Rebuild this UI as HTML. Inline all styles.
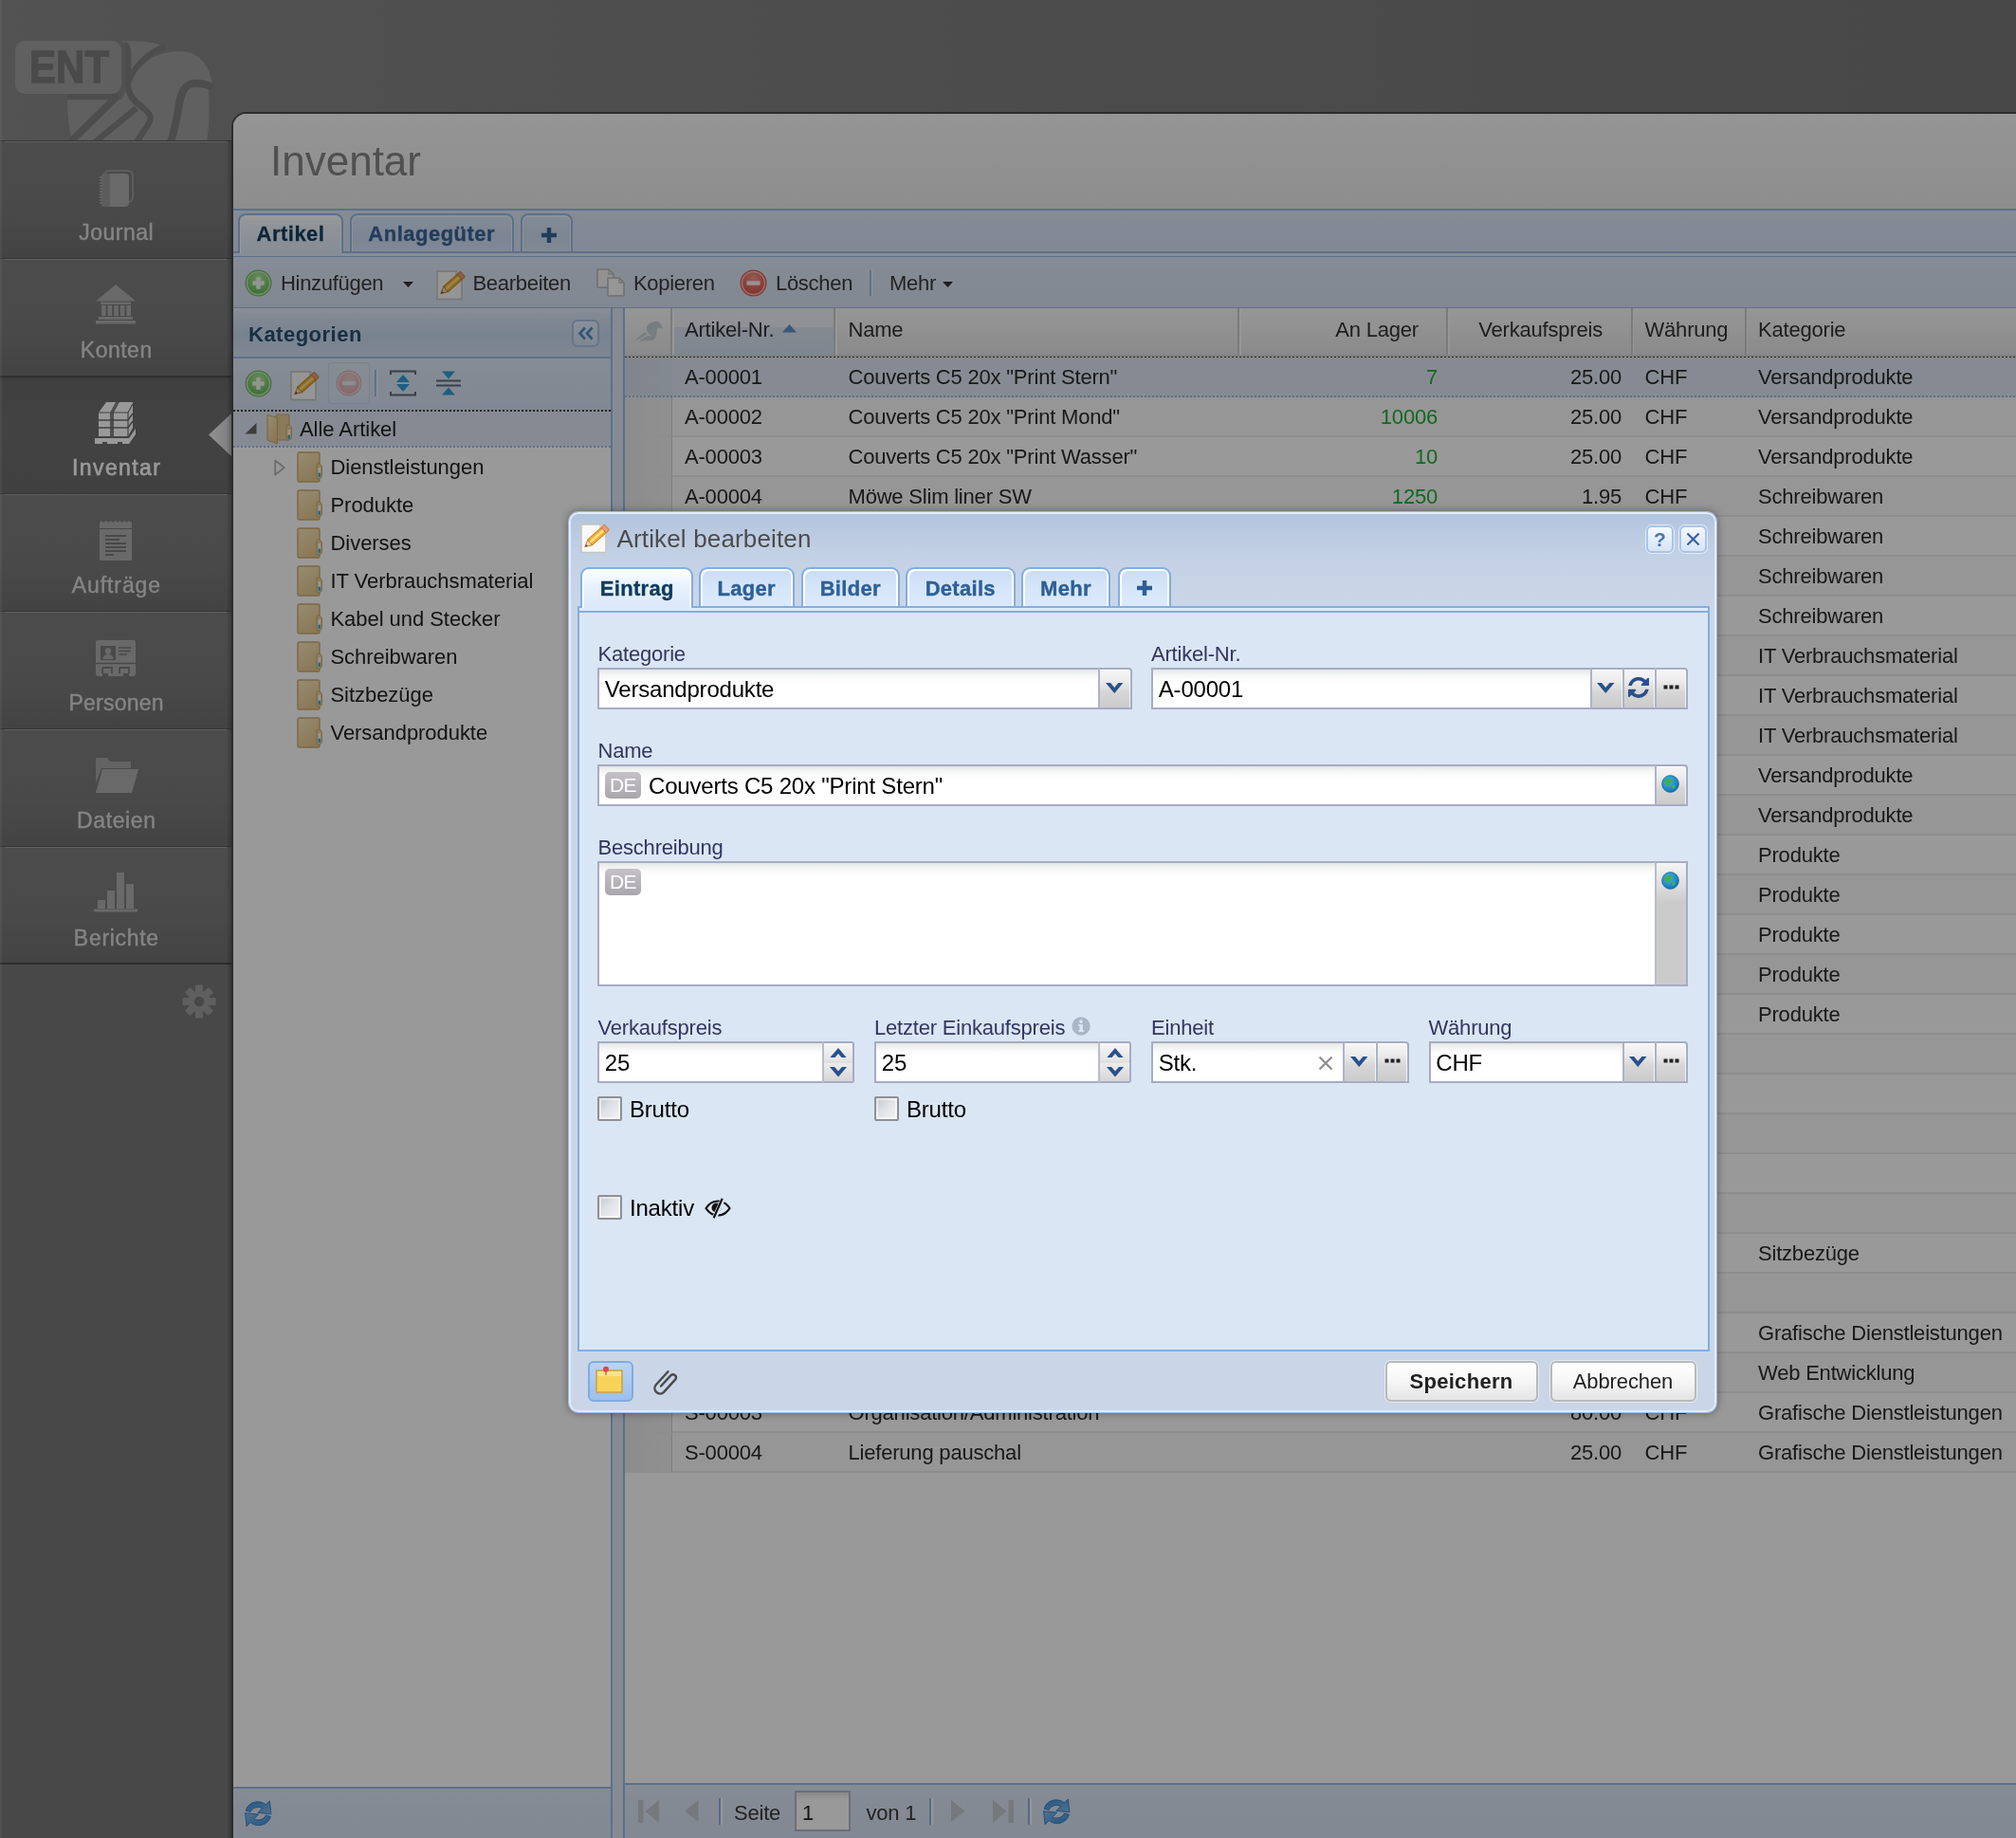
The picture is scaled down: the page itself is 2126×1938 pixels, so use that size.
<!DOCTYPE html>
<html><head><meta charset="utf-8"><title>Inventar</title>
<style>
html,body{margin:0;padding:0}
body{width:2126px;height:1938px;overflow:hidden;position:relative;background:#787878;font-family:"Liberation Sans", sans-serif;}
div{box-sizing:border-box}
svg{display:block;position:absolute}
</style></head><body>
<div id="app" style="position:absolute;left:0;top:0;width:2126px;height:1938px;overflow:hidden;will-change:transform">
<div style="position:absolute;left:0px;top:0px;width:245px;height:1938px;background:#787878;"></div>
<div style="position:absolute;left:0px;top:0px;width:2126px;height:148px;background:linear-gradient(90deg,#8a8a8a 0px,#868686 245px,#7e7e7e 1200px,#787878 2126px);"></div>
<svg style="left:0;top:0" width="245" height="148" viewBox="0 0 245 148">
<defs><clipPath id="lgc"><rect x="0" y="0" width="245" height="148"/></clipPath></defs>
<g clip-path="url(#lgc)">
<path d="M128,43 L150,43.500 C158,44 166,46 173,49 C156,56 143,68 135,84 L135,56 C135,50 133,45 128,43Z" fill="#a0a0a0"/>
<path d="M71,105 L128,105 L132,97 C135,86 146,70 160,61 C170,56 180,54 190,54 C208,54 220,66 224,88 L220,96 C221,110 221,130 218,150 L76,150 C73,136 71,120 71,105Z" fill="#a0a0a0"/>
<path d="M123,102 L74,150" fill="none" stroke="#818181" stroke-width="7.500"/>
<path d="M144,114 L100,150" fill="none" stroke="#818181" stroke-width="6.500"/>
<path d="M131,46 C134,48 135,51 135,56 L135,90 C135,98 140,106 150,113 C158,119 161,124 157,130 L144,150" fill="none" stroke="#818181" stroke-width="6.500"/>
<path d="M174,48.500 C156,56 143,68 136,85" fill="none" stroke="#818181" stroke-width="6"/>
<path d="M71,102 L125,102" fill="none" stroke="#818181" stroke-width="6.500"/>
<path d="M224,92 C215,88 206,87 200,89 C192,93 190,103 188,115 C186,130 183,140 180,150" fill="none" stroke="#818181" stroke-width="8"/>
<rect x="16" y="43" width="112" height="56" rx="10" fill="#a0a0a0"/>
</g></svg>
<div style="position:absolute;left:30.500px;top:45px;font-size:47.500px;line-height:52px;font-weight:bold;color:#7c7c7c;-webkit-text-stroke:1.300px #7c7c7c;transform:scaleX(.885);transform-origin:0 0;letter-spacing:0px;white-space:nowrap">ENT</div>
<div style="position:absolute;left:0px;top:148px;width:245px;height:124px;background:linear-gradient(180deg,#7f7f7f 0%,#7b7b7b 60%,#707070 100%);"></div>
<div style="position:absolute;left:0px;top:148px;width:245px;height:2px;background:#5a5a5a;height:1px;"></div>
<div style="position:absolute;left:5px;top:149px;width:234px;height:1px;background:#a2a2a2;"></div>
<svg style="left:104px;top:179px;" width="37" height="40" viewBox="0 0 37 40"><rect x="6" y="1" width="30" height="33" rx="5" fill="none" stroke="#b0b0b0" stroke-width="1.4" opacity=".8"/>
<rect x="3" y="4" width="29" height="35" rx="4" fill="#b0b0b0"/><rect x="3" y="4" width="9" height="35" rx="2" fill="#9c9c9c"/>
<path d="M1 8h3M1 11h3M1 14h3M1 17h3M1 20h3M1 23h3M1 26h3M1 29h3M1 32h3M1 35h3" stroke="#b0b0b0" stroke-width="1.3"/></svg>
<div style="position:absolute;left:0;top:232.0px;width:245px;text-align:center;font-size:23px;line-height:26px;color:#dcdcdc;letter-spacing:0.5px;font-weight:normal;-webkit-text-stroke:.4px #dcdcdc;padding-left:0.5px">Journal</div>
<div style="position:absolute;left:0px;top:272px;width:245px;height:124px;background:linear-gradient(180deg,#7f7f7f 0%,#7b7b7b 60%,#707070 100%);"></div>
<div style="position:absolute;left:0px;top:272px;width:245px;height:2px;background:#5a5a5a;height:1px;"></div>
<div style="position:absolute;left:5px;top:273px;width:234px;height:1px;background:#a2a2a2;"></div>
<svg style="left:101px;top:300px;" width="42" height="42" viewBox="0 0 42 42"><path d="M21 0l21 17.500H0z" fill="#b0b0b0"/><rect x="5" y="18.500" width="32" height="2.500" fill="#b0b0b0"/>
<rect x="6" y="22" width="4.600" height="11" fill="#b0b0b0"/><rect x="12.600" y="22" width="4.600" height="11" fill="#b0b0b0"/><rect x="19.200" y="22" width="4.600" height="11" fill="#b0b0b0"/><rect x="25.800" y="22" width="4.600" height="11" fill="#b0b0b0"/><rect x="32.400" y="22" width="4.600" height="11" fill="#b0b0b0"/>
<rect x="3" y="34" width="36" height="3" fill="#b0b0b0"/><rect x="0" y="38" width="42" height="3.500" fill="#b0b0b0"/></svg>
<div style="position:absolute;left:0;top:356.0px;width:245px;text-align:center;font-size:23px;line-height:26px;color:#dcdcdc;letter-spacing:0.5px;font-weight:normal;-webkit-text-stroke:.4px #dcdcdc;padding-left:0.5px">Konten</div>
<div style="position:absolute;left:0px;top:396px;width:245px;height:124px;background:linear-gradient(180deg,#5c5c5c 0px,#6a6a6a 5px,#6f6f6f 40%,#6c6c6c 100%);"></div>
<div style="position:absolute;left:0px;top:396px;width:245px;height:2px;background:#505050;"></div>
<svg style="left:100px;top:423px;" width="44" height="46" viewBox="0 0 44 46"><path d="M4 12l8-11h28v27l-5 9H4z" fill="#ffffff"/>
<path d="M4 12h31l5-9M35 12v25" stroke="#6e6e6e" stroke-width="1.200" fill="none"/>
<path d="M4 20h31l5-7M4 28h31l5-7" stroke="#6e6e6e" stroke-width="1.600" fill="none"/>
<path d="M16 12l6-11h4l-6 11v25h-4z" fill="#6e6e6e" opacity=".85"/>
<path d="M0 39h36l7-10v6l-7 10H0z" fill="#ffffff"/><rect x="8" y="43" width="5" height="3" fill="#6e6e6e"/><rect x="24" y="43" width="5" height="3" fill="#6e6e6e"/></svg>
<div style="position:absolute;left:0;top:480.0px;width:245px;text-align:center;font-size:23px;line-height:26px;color:#ffffff;letter-spacing:1.4px;font-weight:normal;-webkit-text-stroke:.6px #ffffff;padding-left:1.4px">Inventar</div>
<div style="position:absolute;left:0px;top:520px;width:245px;height:124px;background:linear-gradient(180deg,#7f7f7f 0%,#7b7b7b 60%,#707070 100%);"></div>
<div style="position:absolute;left:0px;top:520px;width:245px;height:2px;background:#5a5a5a;height:1px;"></div>
<div style="position:absolute;left:5px;top:521px;width:234px;height:1px;background:#a2a2a2;"></div>
<svg style="left:105px;top:549px;" width="34" height="42" viewBox="0 0 34 42"><path d="M0 2l2-2 2.400 2 2.400-2 2.400 2 2.400-2 2.400 2 2.400-2 2.400 2 2.400-2 2.400 2 2.400-2 2.400 2 2.400-2L34 2v40H0z" fill="#b0b0b0"/>
<path d="M0 8.500h34" stroke="#7a7a7a" stroke-width="1.200"/>
<path d="M6 16h22M6 20h15M6 24h22M6 28h22M6 32h22M6 36h9" stroke="#7a7a7a" stroke-width="1.800"/></svg>
<div style="position:absolute;left:0;top:604.0px;width:245px;text-align:center;font-size:23px;line-height:26px;color:#dcdcdc;letter-spacing:0.9px;font-weight:normal;-webkit-text-stroke:.4px #dcdcdc;padding-left:0.9px">Aufträge</div>
<div style="position:absolute;left:0px;top:644px;width:245px;height:124px;background:linear-gradient(180deg,#7f7f7f 0%,#7b7b7b 60%,#707070 100%);"></div>
<div style="position:absolute;left:0px;top:644px;width:245px;height:2px;background:#5a5a5a;height:1px;"></div>
<div style="position:absolute;left:5px;top:645px;width:234px;height:1px;background:#a2a2a2;"></div>
<svg style="left:101px;top:675px;" width="42" height="38" viewBox="0 0 42 38"><path d="M3 0h36a3 3 0 0 1 3 3v32a3 3 0 0 1-3 3h-4v-3h-6v3H13v-3H7v3H3a3 3 0 0 1-3-3V3a3 3 0 0 1 3-3z" fill="#b0b0b0"/>
<rect x="5" y="6" width="16" height="15" fill="#7a7a7a"/><circle cx="13" cy="11.500" r="3.200" fill="#b0b0b0"/><path d="M7.500 20c0-3.500 2.500-5 5.500-5s5.500 1.500 5.500 5z" fill="#b0b0b0"/>
<path d="M24 8h13M24 11.500h13M24 15h9" stroke="#7a7a7a" stroke-width="1.600"/><path d="M0 24.500h42" stroke="#7a7a7a" stroke-width="1.600"/>
<path d="M7 29h10v6M25 29h10v6" stroke="#7a7a7a" stroke-width="1.800" fill="none"/><path d="M7 29v6M25 29v6" stroke="#7a7a7a" stroke-width="1.800"/></svg>
<div style="position:absolute;left:0;top:728.0px;width:245px;text-align:center;font-size:23px;line-height:26px;color:#dcdcdc;letter-spacing:0.2px;font-weight:normal;-webkit-text-stroke:.4px #dcdcdc;padding-left:0.2px">Personen</div>
<div style="position:absolute;left:0px;top:768px;width:245px;height:124px;background:linear-gradient(180deg,#7f7f7f 0%,#7b7b7b 60%,#707070 100%);"></div>
<div style="position:absolute;left:0px;top:768px;width:245px;height:2px;background:#5a5a5a;height:1px;"></div>
<div style="position:absolute;left:5px;top:769px;width:234px;height:1px;background:#a2a2a2;"></div>
<svg style="left:100px;top:799px;" width="46" height="38" viewBox="0 0 46 38"><path d="M1 0h12l3 4h22v7H7L1 26z" fill="#b0b0b0" opacity=".8"/><path d="M8 12h38l-7 25H1z" fill="#b0b0b0"/></svg>
<div style="position:absolute;left:0;top:852.0px;width:245px;text-align:center;font-size:23px;line-height:26px;color:#dcdcdc;letter-spacing:0.6px;font-weight:normal;-webkit-text-stroke:.4px #dcdcdc;padding-left:0.6px">Dateien</div>
<div style="position:absolute;left:0px;top:892px;width:245px;height:124px;background:linear-gradient(180deg,#7f7f7f 0%,#7b7b7b 60%,#707070 100%);"></div>
<div style="position:absolute;left:0px;top:892px;width:245px;height:2px;background:#5a5a5a;height:1px;"></div>
<div style="position:absolute;left:5px;top:893px;width:234px;height:1px;background:#a2a2a2;"></div>
<svg style="left:99px;top:920px;" width="46" height="42" viewBox="0 0 46 42"><rect x="4" y="29" width="8" height="9" fill="#b0b0b0"/><rect x="14" y="19" width="8" height="19" fill="#b0b0b0"/><rect x="24" y="0" width="8" height="38" fill="#b0b0b0"/><rect x="34" y="12" width="8" height="26" fill="#b0b0b0"/><rect x="0" y="38.500" width="46" height="3" fill="#b0b0b0"/></svg>
<div style="position:absolute;left:0;top:976.0px;width:245px;text-align:center;font-size:23px;line-height:26px;color:#dcdcdc;letter-spacing:0.7px;font-weight:normal;-webkit-text-stroke:.4px #dcdcdc;padding-left:0.7px">Berichte</div>
<div style="position:absolute;left:0px;top:1015px;width:245px;height:2px;background:#4c4c4c;"></div>
<svg style="left:220px;top:435px" width="25" height="47" viewBox="0 0 25 47"><defs><linearGradient id="arw" x1="0" x2="1" y1="0" y2="0"><stop offset="0" stop-color="#f2f2f2"/><stop offset="1" stop-color="#d2d2d2"/></linearGradient></defs><path d="M25 0v47L0 23.500z" fill="url(#arw)"/></svg>
<svg style="left:192px;top:1038px" width="36" height="36" viewBox="0 0 36 36"><g fill="#9e9e9e"><circle cx="18" cy="18" r="11.500"/><rect x="14" y="0.500" width="8" height="9" rx="1.200" transform="rotate(0 18 18)"/><rect x="14" y="0.500" width="8" height="9" rx="1.200" transform="rotate(45 18 18)"/><rect x="14" y="0.500" width="8" height="9" rx="1.200" transform="rotate(90 18 18)"/><rect x="14" y="0.500" width="8" height="9" rx="1.200" transform="rotate(135 18 18)"/><rect x="14" y="0.500" width="8" height="9" rx="1.200" transform="rotate(180 18 18)"/><rect x="14" y="0.500" width="8" height="9" rx="1.200" transform="rotate(225 18 18)"/><rect x="14" y="0.500" width="8" height="9" rx="1.200" transform="rotate(270 18 18)"/><rect x="14" y="0.500" width="8" height="9" rx="1.200" transform="rotate(315 18 18)"/></g><circle cx="18" cy="18" r="5.200" fill="#787878"/></svg>
<div style="position:absolute;left:239px;top:148px;width:6px;height:1790px;background:linear-gradient(90deg,rgba(0,0,0,0),rgba(0,0,0,.28));"></div>
<div style="position:absolute;left:0px;top:0px;width:2px;height:1938px;background:rgba(255,255,255,.12);"></div>
<div style="position:absolute;left:244px;top:118px;width:1900px;height:1840px;background:#4a4a4a;border-top-left-radius:16px;"></div>
<div style="position:absolute;left:246px;top:120px;width:1900px;height:1840px;background:#fff;border-top-left-radius:14px;overflow:hidden">
<div style="position:absolute;left:0px;top:0px;width:1900px;height:100px;background:linear-gradient(180deg,#f8f8f8,#ececec);"></div>
<div style="position:absolute;left:39px;top:20.75px;font-size:44px;line-height:57px;color:#858585;font-weight:normal;letter-spacing:0px;white-space:nowrap;">Inventar</div>
<div style="position:absolute;left:0px;top:99.5px;width:1900px;height:51.5px;background:linear-gradient(180deg,#dfe9f9,#d6e3f6);border-top:2px solid #99bbe8;"></div>
<div style="position:absolute;left:0px;top:144.5px;width:1900px;height:7px;background:#e1ebfa;border-top:2px solid #99bbe8;border-bottom:2px solid #99bbe8;"></div>
<div style="position:absolute;left:5px;top:104.5px;width:111px;height:42.0px;background:linear-gradient(180deg,#ffffff 0%,#eef5fd 35%,#e1ebfa 100%);border:2px solid #99bbe8;border-bottom:none;border-radius:8px 8px 0 0;box-shadow:inset 0 1px 0 1px #fff;"><div style="position:absolute;left:0;right:0;top:6.400px;text-align:center;font-size:22px;line-height:28px;font-weight:bold;color:#163f5f;letter-spacing:0.5px;-webkit-text-stroke:.3px #163f5f">Artikel</div></div>
<div style="position:absolute;left:122.5px;top:104.5px;width:173.5px;height:40.0px;background:linear-gradient(180deg,#dbe8f9 0%,#cfdff4 60%,#d6e4f7 100%);border:2px solid #99bbe8;border-bottom:none;border-radius:8px 8px 0 0;box-shadow:inset 0 1px 0 1px #eef4fc;"><div style="position:absolute;left:0;right:0;top:6.400px;text-align:center;font-size:22px;line-height:28px;font-weight:bold;color:#39659c;letter-spacing:0.5px;-webkit-text-stroke:.3px #39659c">Anlagegüter</div></div>
<div style="position:absolute;left:303px;top:104.5px;width:55px;height:40.0px;background:linear-gradient(180deg,#dbe8f9 0%,#cfdff4 60%,#d6e4f7 100%);border:2px solid #99bbe8;border-bottom:none;border-radius:8px 8px 0 0;box-shadow:inset 0 1px 0 1px #eef4fc;"><svg style="left:18.5px;top:12.0px" width="18" height="18" viewBox="0 0 18 18"><path d="M9 1v16M1 9h16" stroke="#39659c" stroke-width="4.400"/></svg></div>
<div style="position:absolute;left:0px;top:151px;width:1900px;height:54.5px;background:linear-gradient(180deg,#e0e9f8,#d7e3f5);border-bottom:2px solid #99bbe8;"></div>
<div style="position:absolute;left:-246px;top:-120px;width:0;height:0"><svg style="left:257.5px;top:283.5px;opacity:1" width="29" height="29" viewBox="0 0 29 29"><defs><radialGradient id="g1" cx="50%" cy="30%" r="75%"><stop offset="0" stop-color="#b4e8a0"/><stop offset="1" stop-color="#5db552"/></radialGradient></defs>
<circle cx="14.500" cy="14.500" r="14" fill="#72bd66"/><circle cx="14.500" cy="14.500" r="12" fill="url(#g1)" stroke="#c4ecb8" stroke-width="1.400"/>
<path d="M14.500 8.300v12.400M8.300 14.500h12.400" stroke="#f4fbf1" stroke-width="4.400"/></svg></div>
<div style="position:absolute;left:50px;top:163.88px;font-size:22px;line-height:29px;color:#3a3a3a;font-weight:normal;letter-spacing:-0.3px;white-space:nowrap;">Hinzufügen</div>
<div style="position:absolute;left:-246px;top:-120px;width:0;height:0"><svg style="left:425px;top:297px;" width="11" height="6" viewBox="0 0 11 6"><path d="M0 0h11l-5.5 6z" fill="#333"/></svg></div>
<div style="position:absolute;left:-246px;top:-120px;width:0;height:0"><svg style="left:459.5px;top:285px;" width="32" height="32" viewBox="0 0 32 32"><path d="M1 1h20l6 6v23.500h-26z" fill="#f8f8f8" stroke="#c4c4c4" stroke-width="1.500" stroke-linejoin="round"/><path d="M21 1v6h6" fill="#e9e9e9" stroke="#c4c4c4" stroke-width="1.200" stroke-linejoin="round"/>
<g transform="translate(5,24.5) rotate(-41.71)">
<path d="M0 0L7 -3.7V3.7Z" fill="#f4dcae" stroke="#c58a3a" stroke-width="1"/><path d="M0 0L2.600 -1.400V1.400Z" fill="#6b5030"/>
<rect x="7" y="-3.7" width="19.31" height="7.4" fill="#f2ae34" stroke="#c9842a" stroke-width="1"/>
<rect x="7" y="-1.300" width="19.31" height="2.600" fill="#fbe27e"/>
<rect x="26.31" y="-3.7" width="4.500" height="7.4" rx="1" fill="#ee9a86" stroke="#c9842a" stroke-width="1"/>
</g></svg></div>
<div style="position:absolute;left:252.5px;top:163.88px;font-size:22px;line-height:29px;color:#3a3a3a;font-weight:normal;letter-spacing:-0.3px;white-space:nowrap;">Bearbeiten</div>
<div style="position:absolute;left:-246px;top:-120px;width:0;height:0"><svg style="left:628px;top:282px;" width="32" height="32" viewBox="0 0 32 32"><path d="M2 2h12l5 5v14H2z" fill="#f4f4f4" stroke="#b9b9b9" stroke-width="1.5" stroke-linejoin="round"/><path d="M14 2v5h5" fill="none" stroke="#c0c0c0" stroke-width="1.3"/>
<path d="M13 11h12l5 5v14H13z" fill="#fafafa" stroke="#b9b9b9" stroke-width="1.5" stroke-linejoin="round"/><path d="M25 11v5h5" fill="none" stroke="#c0c0c0" stroke-width="1.3"/></svg></div>
<div style="position:absolute;left:422px;top:163.88px;font-size:22px;line-height:29px;color:#3a3a3a;font-weight:normal;letter-spacing:-0.3px;white-space:nowrap;">Kopieren</div>
<div style="position:absolute;left:-246px;top:-120px;width:0;height:0"><svg style="left:779.5px;top:283.5px;opacity:1" width="29" height="29" viewBox="0 0 29 29"><defs><radialGradient id="g2" cx="50%" cy="30%" r="75%"><stop offset="0" stop-color="#f79a90"/><stop offset="1" stop-color="#dc4a40"/></radialGradient></defs>
<circle cx="14.500" cy="14.500" r="14" fill="#dd5d53"/><circle cx="14.500" cy="14.500" r="12" fill="url(#g2)" stroke="#f8c2bc" stroke-width="1.400"/>
<path d="M7.500 14.500h14" stroke="#fdf3f2" stroke-width="4.400"/></svg></div>
<div style="position:absolute;left:572px;top:163.88px;font-size:22px;line-height:29px;color:#3a3a3a;font-weight:normal;letter-spacing:-0.3px;white-space:nowrap;">Löschen</div>
<div style="position:absolute;left:671px;top:165px;width:2px;height:27px;background:#9dbbe0;"></div>
<div style="position:absolute;left:673px;top:165px;width:1px;height:27px;background:#fff;opacity:.7"></div>
<div style="position:absolute;left:692px;top:163.88px;font-size:22px;line-height:29px;color:#3a3a3a;font-weight:normal;letter-spacing:-0.3px;white-space:nowrap;">Mehr</div>
<div style="position:absolute;left:-246px;top:-120px;width:0;height:0"><svg style="left:994px;top:297px;" width="11" height="6" viewBox="0 0 11 6"><path d="M0 0h11l-5.5 6z" fill="#333"/></svg></div>
<div style="position:absolute;left:0px;top:205px;width:400px;height:1620px;background:#fff;border-right:2px solid #99bbe8;"></div>
<div style="position:absolute;left:0px;top:205px;width:398px;height:52.5px;background:linear-gradient(180deg,#eaf1fb 0%,#d9e5f5 12%,#c9daf0 55%,#d3e1f3 100%);border-bottom:2px solid #99bbe8;"></div>
<div style="position:absolute;left:16px;top:217.88px;font-size:22px;line-height:29px;color:#27516f;font-weight:bold;letter-spacing:0.5px;white-space:nowrap;">Kategorien</div>
<div style="position:absolute;left:357px;top:217px;width:29px;height:29px;border:2px solid #a8c2e4;border-radius:6px;background:linear-gradient(180deg,#e8f0fb,#d3e1f4);"></div>
<div style="position:absolute;left:-246px;top:-120px;width:0;height:0"><svg style="left:609px;top:344px;" width="18" height="15" viewBox="0 0 18 15"><path d="M8 1.500L2.500 7.500 8 13.500M15.500 1.500L10 7.500l5.500 6" fill="none" stroke="#4f8fc8" stroke-width="2.600"/></svg></div>
<div style="position:absolute;left:0px;top:257.5px;width:398px;height:54.5px;background:linear-gradient(180deg,#e0e9f8,#d7e3f5);"></div>
<div style="position:absolute;left:-246px;top:-120px;width:0;height:0"><svg style="left:257.5px;top:389.5px;opacity:1" width="29" height="29" viewBox="0 0 29 29"><defs><radialGradient id="g3" cx="50%" cy="30%" r="75%"><stop offset="0" stop-color="#b4e8a0"/><stop offset="1" stop-color="#5db552"/></radialGradient></defs>
<circle cx="14.500" cy="14.500" r="14" fill="#72bd66"/><circle cx="14.500" cy="14.500" r="12" fill="url(#g3)" stroke="#c4ecb8" stroke-width="1.400"/>
<path d="M14.500 8.300v12.400M8.300 14.500h12.400" stroke="#f4fbf1" stroke-width="4.400"/></svg></div>
<div style="position:absolute;left:-246px;top:-120px;width:0;height:0"><svg style="left:305.5px;top:391px;" width="32" height="32" viewBox="0 0 32 32"><path d="M1 1h20l6 6v23.500h-26z" fill="#f8f8f8" stroke="#c4c4c4" stroke-width="1.500" stroke-linejoin="round"/><path d="M21 1v6h6" fill="#e9e9e9" stroke="#c4c4c4" stroke-width="1.200" stroke-linejoin="round"/>
<g transform="translate(5,24.5) rotate(-41.71)">
<path d="M0 0L7 -3.7V3.7Z" fill="#f4dcae" stroke="#c58a3a" stroke-width="1"/><path d="M0 0L2.600 -1.400V1.400Z" fill="#6b5030"/>
<rect x="7" y="-3.7" width="19.31" height="7.4" fill="#f2ae34" stroke="#c9842a" stroke-width="1"/>
<rect x="7" y="-1.300" width="19.31" height="2.600" fill="#fbe27e"/>
<rect x="26.31" y="-3.7" width="4.500" height="7.4" rx="1" fill="#ee9a86" stroke="#c9842a" stroke-width="1"/>
</g></svg></div>
<div style="position:absolute;left:100px;top:262px;width:44px;height:44px;border:1px solid rgba(190,205,225,.6);border-radius:4px;background:rgba(225,233,246,.5)"></div>
<div style="position:absolute;left:-246px;top:-120px;width:0;height:0"><svg style="left:353.5px;top:389.5px;opacity:0.38" width="28" height="28" viewBox="0 0 29 29"><defs><radialGradient id="g4" cx="50%" cy="30%" r="75%"><stop offset="0" stop-color="#f79a90"/><stop offset="1" stop-color="#dc4a40"/></radialGradient></defs>
<circle cx="14.500" cy="14.500" r="14" fill="#dd5d53"/><circle cx="14.500" cy="14.500" r="12" fill="url(#g4)" stroke="#f8c2bc" stroke-width="1.400"/>
<path d="M7.500 14.500h14" stroke="#fdf3f2" stroke-width="4.400"/></svg></div>
<div style="position:absolute;left:149px;top:270px;width:2px;height:28px;background:#9dbbe0;"></div>
<div style="position:absolute;left:151px;top:270px;width:1px;height:28px;background:#fff;opacity:.7"></div>
<div style="position:absolute;left:-246px;top:-120px;width:0;height:0"><svg style="left:411px;top:390px;" width="28" height="28" viewBox="0 0 28 28"><path d="M1 5V1.5h26V5M1 23v3.5h26V23" fill="none" stroke="#5f6b7a" stroke-width="2"/>
<path d="M14 5l7 8H7zM14 23l7-8H7z" fill="#2f9fd8"/></svg></div>
<div style="position:absolute;left:-246px;top:-120px;width:0;height:0"><svg style="left:459px;top:390px;" width="28" height="28" viewBox="0 0 28 28"><path d="M1 11.5h26M1 16.5h26" fill="none" stroke="#5f6b7a" stroke-width="2"/>
<path d="M14 9.5l7-8H7zM14 18.5l7 8H7z" fill="#2f9fd8"/></svg></div>
<div style="position:absolute;left:0px;top:312px;width:398px;height:2px;background:repeating-linear-gradient(90deg,#3c3c3c 0 2px,#dcdcdc 2px 4px);"></div>
<div style="position:absolute;left:0px;top:314px;width:398px;height:37px;background:#dfe8f6;"></div>
<div style="position:absolute;left:0px;top:350px;width:398px;height:2px;background:repeating-linear-gradient(90deg,#9fb9e6 0 2px,transparent 2px 4px);"></div>
<div style="position:absolute;left:-246px;top:-120px;width:0;height:0"><svg style="left:258px;top:446px;" width="13" height="12" viewBox="0 0 13 12"><path d="M12.500 0v11.500H.5z" fill="#666"/></svg></div>
<div style="position:absolute;left:-246px;top:-120px;width:0;height:0"><svg style="left:281px;top:435.5px;" width="28" height="34" viewBox="0 0 28 34"><defs><linearGradient id="g5" x1="0" y1="0" x2=".6" y2="1"><stop offset="0" stop-color="#fbeac0"/><stop offset="1" stop-color="#e6c88f"/></linearGradient></defs><rect x="10" y="1" width="14" height="27" rx="1.500" fill="#e6cb94" stroke="#cfac70" stroke-width="1.200"/><path d="M21 12.500c3-1.500 5.500.5 5.500 3.500v8.500c0 2-1.500 3.500-3.500 3.500H21z" fill="#e9d09a" stroke="#cfac70" stroke-width="1"/><rect x="22.600" y="17" width="2.400" height="6" fill="#fdfdfd"/><rect x="22.600" y="22.500" width="2.400" height="4.500" rx="1" fill="#38b0dc"/><path d="M1 1.500l10.500 3v27.500L1 28z" fill="url(#g5)" stroke="#cfac70" stroke-width="1.200" stroke-linejoin="round"/></svg></div>
<div style="position:absolute;left:70px;top:317.88px;font-size:22px;line-height:29px;color:#222;font-weight:normal;letter-spacing:-0.05px;white-space:nowrap;">Alle Artikel</div>
<div style="position:absolute;left:-246px;top:-120px;width:0;height:0"><svg style="left:289px;top:484px;" width="12" height="18" viewBox="0 0 12 18"><path d="M1.200 1.500v15l9.600-7.500z" fill="none" stroke="#b4b4b4" stroke-width="1.800" stroke-linejoin="round"/></svg></div>
<div style="position:absolute;left:-246px;top:-120px;width:0;height:0"><svg style="left:313px;top:475.5px;" width="28" height="34" viewBox="0 0 28 34"><defs><linearGradient id="g6" x1="0" y1="0" x2=".6" y2="1"><stop offset="0" stop-color="#fbeac0"/><stop offset="1" stop-color="#e6c88f"/></linearGradient></defs><rect x="1" y="1" width="23" height="31" rx="1.500" fill="url(#g6)" stroke="#cfac70" stroke-width="1.400"/><path d="M21 13.500c3-1.500 5.500.5 5.500 3.500v8.500c0 2-1.500 3.500-3.500 3.500H21z" fill="#e9d09a" stroke="#cfac70" stroke-width="1"/><rect x="22.600" y="17" width="2.400" height="6" fill="#fdfdfd"/><rect x="22.600" y="22.500" width="2.400" height="4.500" rx="1" fill="#38b0dc"/></svg></div>
<div style="position:absolute;left:102.5px;top:357.88px;font-size:22px;line-height:29px;color:#222;font-weight:normal;letter-spacing:-0.05px;white-space:nowrap;">Dienstleistungen</div>
<div style="position:absolute;left:-246px;top:-120px;width:0;height:0"><svg style="left:313px;top:515.5px;" width="28" height="34" viewBox="0 0 28 34"><defs><linearGradient id="g7" x1="0" y1="0" x2=".6" y2="1"><stop offset="0" stop-color="#fbeac0"/><stop offset="1" stop-color="#e6c88f"/></linearGradient></defs><rect x="1" y="1" width="23" height="31" rx="1.500" fill="url(#g7)" stroke="#cfac70" stroke-width="1.400"/><path d="M21 13.500c3-1.500 5.500.5 5.500 3.500v8.500c0 2-1.500 3.500-3.500 3.500H21z" fill="#e9d09a" stroke="#cfac70" stroke-width="1"/><rect x="22.600" y="17" width="2.400" height="6" fill="#fdfdfd"/><rect x="22.600" y="22.500" width="2.400" height="4.500" rx="1" fill="#38b0dc"/></svg></div>
<div style="position:absolute;left:102.5px;top:397.88px;font-size:22px;line-height:29px;color:#222;font-weight:normal;letter-spacing:-0.05px;white-space:nowrap;">Produkte</div>
<div style="position:absolute;left:-246px;top:-120px;width:0;height:0"><svg style="left:313px;top:555.5px;" width="28" height="34" viewBox="0 0 28 34"><defs><linearGradient id="g8" x1="0" y1="0" x2=".6" y2="1"><stop offset="0" stop-color="#fbeac0"/><stop offset="1" stop-color="#e6c88f"/></linearGradient></defs><rect x="1" y="1" width="23" height="31" rx="1.500" fill="url(#g8)" stroke="#cfac70" stroke-width="1.400"/><path d="M21 13.500c3-1.500 5.500.5 5.500 3.500v8.500c0 2-1.500 3.500-3.500 3.500H21z" fill="#e9d09a" stroke="#cfac70" stroke-width="1"/><rect x="22.600" y="17" width="2.400" height="6" fill="#fdfdfd"/><rect x="22.600" y="22.500" width="2.400" height="4.500" rx="1" fill="#38b0dc"/></svg></div>
<div style="position:absolute;left:102.5px;top:437.88px;font-size:22px;line-height:29px;color:#222;font-weight:normal;letter-spacing:-0.05px;white-space:nowrap;">Diverses</div>
<div style="position:absolute;left:-246px;top:-120px;width:0;height:0"><svg style="left:313px;top:595.5px;" width="28" height="34" viewBox="0 0 28 34"><defs><linearGradient id="g9" x1="0" y1="0" x2=".6" y2="1"><stop offset="0" stop-color="#fbeac0"/><stop offset="1" stop-color="#e6c88f"/></linearGradient></defs><rect x="1" y="1" width="23" height="31" rx="1.500" fill="url(#g9)" stroke="#cfac70" stroke-width="1.400"/><path d="M21 13.500c3-1.500 5.500.5 5.500 3.500v8.500c0 2-1.500 3.500-3.500 3.500H21z" fill="#e9d09a" stroke="#cfac70" stroke-width="1"/><rect x="22.600" y="17" width="2.400" height="6" fill="#fdfdfd"/><rect x="22.600" y="22.500" width="2.400" height="4.500" rx="1" fill="#38b0dc"/></svg></div>
<div style="position:absolute;left:102.5px;top:477.88px;font-size:22px;line-height:29px;color:#222;font-weight:normal;letter-spacing:-0.05px;white-space:nowrap;">IT Verbrauchsmaterial</div>
<div style="position:absolute;left:-246px;top:-120px;width:0;height:0"><svg style="left:313px;top:635.5px;" width="28" height="34" viewBox="0 0 28 34"><defs><linearGradient id="g10" x1="0" y1="0" x2=".6" y2="1"><stop offset="0" stop-color="#fbeac0"/><stop offset="1" stop-color="#e6c88f"/></linearGradient></defs><rect x="1" y="1" width="23" height="31" rx="1.500" fill="url(#g10)" stroke="#cfac70" stroke-width="1.400"/><path d="M21 13.500c3-1.500 5.500.5 5.500 3.500v8.500c0 2-1.500 3.500-3.500 3.500H21z" fill="#e9d09a" stroke="#cfac70" stroke-width="1"/><rect x="22.600" y="17" width="2.400" height="6" fill="#fdfdfd"/><rect x="22.600" y="22.500" width="2.400" height="4.500" rx="1" fill="#38b0dc"/></svg></div>
<div style="position:absolute;left:102.5px;top:517.88px;font-size:22px;line-height:29px;color:#222;font-weight:normal;letter-spacing:-0.05px;white-space:nowrap;">Kabel und Stecker</div>
<div style="position:absolute;left:-246px;top:-120px;width:0;height:0"><svg style="left:313px;top:675.5px;" width="28" height="34" viewBox="0 0 28 34"><defs><linearGradient id="g11" x1="0" y1="0" x2=".6" y2="1"><stop offset="0" stop-color="#fbeac0"/><stop offset="1" stop-color="#e6c88f"/></linearGradient></defs><rect x="1" y="1" width="23" height="31" rx="1.500" fill="url(#g11)" stroke="#cfac70" stroke-width="1.400"/><path d="M21 13.500c3-1.500 5.500.5 5.500 3.500v8.500c0 2-1.500 3.500-3.500 3.500H21z" fill="#e9d09a" stroke="#cfac70" stroke-width="1"/><rect x="22.600" y="17" width="2.400" height="6" fill="#fdfdfd"/><rect x="22.600" y="22.500" width="2.400" height="4.500" rx="1" fill="#38b0dc"/></svg></div>
<div style="position:absolute;left:102.5px;top:557.88px;font-size:22px;line-height:29px;color:#222;font-weight:normal;letter-spacing:-0.05px;white-space:nowrap;">Schreibwaren</div>
<div style="position:absolute;left:-246px;top:-120px;width:0;height:0"><svg style="left:313px;top:715.5px;" width="28" height="34" viewBox="0 0 28 34"><defs><linearGradient id="g12" x1="0" y1="0" x2=".6" y2="1"><stop offset="0" stop-color="#fbeac0"/><stop offset="1" stop-color="#e6c88f"/></linearGradient></defs><rect x="1" y="1" width="23" height="31" rx="1.500" fill="url(#g12)" stroke="#cfac70" stroke-width="1.400"/><path d="M21 13.500c3-1.500 5.500.5 5.500 3.500v8.500c0 2-1.500 3.500-3.500 3.500H21z" fill="#e9d09a" stroke="#cfac70" stroke-width="1"/><rect x="22.600" y="17" width="2.400" height="6" fill="#fdfdfd"/><rect x="22.600" y="22.500" width="2.400" height="4.500" rx="1" fill="#38b0dc"/></svg></div>
<div style="position:absolute;left:102.5px;top:597.88px;font-size:22px;line-height:29px;color:#222;font-weight:normal;letter-spacing:-0.05px;white-space:nowrap;">Sitzbezüge</div>
<div style="position:absolute;left:-246px;top:-120px;width:0;height:0"><svg style="left:313px;top:755.5px;" width="28" height="34" viewBox="0 0 28 34"><defs><linearGradient id="g13" x1="0" y1="0" x2=".6" y2="1"><stop offset="0" stop-color="#fbeac0"/><stop offset="1" stop-color="#e6c88f"/></linearGradient></defs><rect x="1" y="1" width="23" height="31" rx="1.500" fill="url(#g13)" stroke="#cfac70" stroke-width="1.400"/><path d="M21 13.500c3-1.500 5.500.5 5.500 3.500v8.500c0 2-1.500 3.500-3.500 3.500H21z" fill="#e9d09a" stroke="#cfac70" stroke-width="1"/><rect x="22.600" y="17" width="2.400" height="6" fill="#fdfdfd"/><rect x="22.600" y="22.500" width="2.400" height="4.500" rx="1" fill="#38b0dc"/></svg></div>
<div style="position:absolute;left:102.5px;top:637.88px;font-size:22px;line-height:29px;color:#222;font-weight:normal;letter-spacing:-0.05px;white-space:nowrap;">Versandprodukte</div>
<div style="position:absolute;left:0px;top:1764px;width:398px;height:60px;background:linear-gradient(180deg,#e0e9f8,#d7e3f5);border-top:2px solid #99bbe8;"></div>
<div style="position:absolute;left:-246px;top:-120px;width:0;height:0"><svg style="left:258px;top:1898px;" width="28.5" height="28.5" viewBox="0 0 28 28"><defs><linearGradient id="g14" x1="0" y1="0" x2="1" y2="1"><stop offset="0" stop-color="#3b8fdc"/><stop offset="1" stop-color="#86bdec"/></linearGradient></defs>
<g transform="translate(14 14) scale(1.220) translate(-14 -14)"><path d="M3.500 11.500C5 4.500 14.500 1.500 20.500 6.500L23.800 3.200L25 14.500L13.700 13.300L17.500 9.500C14.500 7.600 9.200 8.500 7.500 12.500Z" fill="url(#g14)" stroke="#3279c4" stroke-width=".700" stroke-linejoin="round"/>
<path d="M3.500 11.500C5 4.500 14.500 1.500 20.500 6.500L23.800 3.200L25 14.500L13.700 13.300L17.500 9.500C14.500 7.600 9.200 8.500 7.500 12.500Z" fill="url(#g14)" stroke="#3279c4" stroke-width=".700" stroke-linejoin="round" transform="rotate(180 14 14)"/></g></svg></div>
<div style="position:absolute;left:400px;top:205px;width:12px;height:1620px;background:#dfe8f6;"></div>
<div style="position:absolute;left:411px;top:205px;width:1500px;height:1620px;background:#fff;border-left:2px solid #99bbe8;"></div>
<div style="position:absolute;left:413px;top:205px;width:1500px;height:51px;background:linear-gradient(180deg,#fafafa 0%,#f3f3f3 40%,#e6e6e6 100%);border-bottom:2px solid #d4d4d4;"></div>
<div style="position:absolute;left:464px;top:205px;width:170px;height:49px;background:linear-gradient(180deg,#f3f6fa 0%,#eef2f7 40%,#dbe6f3 42%,#d4e1f1 100%);"></div>
<div style="position:absolute;left:461.0px;top:205px;width:2px;height:49px;background:#cdcdcd;"></div>
<div style="position:absolute;left:463.0px;top:205px;width:1.5px;height:49px;background:#fcfcfc;"></div>
<div style="position:absolute;left:633.0px;top:205px;width:2px;height:49px;background:#cdcdcd;"></div>
<div style="position:absolute;left:635.0px;top:205px;width:1.5px;height:49px;background:#fcfcfc;"></div>
<div style="position:absolute;left:1059.0px;top:205px;width:2px;height:49px;background:#cdcdcd;"></div>
<div style="position:absolute;left:1061.0px;top:205px;width:1.5px;height:49px;background:#fcfcfc;"></div>
<div style="position:absolute;left:1279.0px;top:205px;width:2px;height:49px;background:#cdcdcd;"></div>
<div style="position:absolute;left:1281.0px;top:205px;width:1.5px;height:49px;background:#fcfcfc;"></div>
<div style="position:absolute;left:1473.5px;top:205px;width:2px;height:49px;background:#cdcdcd;"></div>
<div style="position:absolute;left:1475.5px;top:205px;width:1.5px;height:49px;background:#fcfcfc;"></div>
<div style="position:absolute;left:1593.5px;top:205px;width:2px;height:49px;background:#cdcdcd;"></div>
<div style="position:absolute;left:1595.5px;top:205px;width:1.5px;height:49px;background:#fcfcfc;"></div>
<div style="position:absolute;left:-246px;top:-120px;width:0;height:0"><svg style="left:667px;top:338px;" width="32" height="24" viewBox="0 0 32 24"><path d="M14.800,8 C15.500,3 21,1 25.500,1 C29,1 31,5 31.800,8.400 C30,7.600 28,7.400 27,8 C25.500,9 25.600,11.500 25.300,14 C25,18 23,20.500 19,21 L13.300,21 C16.500,19.500 19,17.500 19.600,15.400 C17,13.500 14.500,11.500 14.800,8 Z" fill="#c3d0d5"/>
<path d="M12.600,12.300 L15.200,14.700 L0.500,22.800 Z" fill="#c3d0d5"/>
<path d="M16.300,15.600 L18.600,17.200 C17.500,19 13.500,21.500 6,22.200 Z" fill="#c3d0d5"/></svg></div>
<div style="position:absolute;left:476px;top:212.88px;font-size:22px;line-height:29px;color:#333;font-weight:normal;letter-spacing:-0.2px;white-space:nowrap;">Artikel-Nr.</div>
<div style="position:absolute;left:-246px;top:-120px;width:0;height:0"><svg style="left:824.5px;top:342px;" width="15" height="8.5" viewBox="0 0 15 8.5"><path d="M0 8.5h15l-7.5 -8.5z" fill="#5f94c9"/></svg></div>
<div style="position:absolute;left:648.5px;top:212.88px;font-size:22px;line-height:29px;color:#333;font-weight:normal;letter-spacing:-0.2px;white-space:nowrap;">Name</div>
<div style="position:absolute;right:650px;top:212.88px;font-size:22px;line-height:29px;color:#333;font-weight:normal;letter-spacing:-0.2px;white-space:nowrap;">An Lager</div>
<div style="position:absolute;right:456px;top:212.88px;font-size:22px;line-height:29px;color:#333;font-weight:normal;letter-spacing:-0.2px;white-space:nowrap;">Verkaufspreis</div>
<div style="position:absolute;left:1488.5px;top:212.88px;font-size:22px;line-height:29px;color:#333;font-weight:normal;letter-spacing:-0.2px;white-space:nowrap;">Währung</div>
<div style="position:absolute;left:1608px;top:212.88px;font-size:22px;line-height:29px;color:#333;font-weight:normal;letter-spacing:-0.2px;white-space:nowrap;">Kategorie</div>
<div style="position:absolute;left:413px;top:256px;width:1500px;height:2px;background:repeating-linear-gradient(90deg,#3c3c3c 0 2px,#dcdcdc 2px 4px);"></div>
<div style="position:absolute;left:413px;top:257px;width:1500px;height:42px;background:#dfe8f6;border-bottom:2px solid #ececec;"></div>
<div style="position:absolute;left:413px;top:257px;width:50px;height:41px;background:linear-gradient(90deg,#d6dfec,#dce5f2);"></div>
<div style="position:absolute;left:413px;top:297px;width:1500px;height:2px;background:repeating-linear-gradient(90deg,#9fb9e6 0 2px,transparent 2px 4px);background-color:#dfe8f6;"></div>
<div style="position:absolute;left:476px;top:262.88px;font-size:22px;line-height:29px;color:#2a2a2a;font-weight:normal;letter-spacing:-0.2px;white-space:nowrap;">A-00001</div>
<div style="position:absolute;left:648.5px;top:262.88px;font-size:22px;line-height:29px;color:#2a2a2a;font-weight:normal;letter-spacing:-0.2px;white-space:nowrap;">Couverts C5 20x "Print Stern"</div>
<div style="position:absolute;right:630px;top:262.88px;font-size:22px;line-height:29px;color:#1fae32;font-weight:normal;letter-spacing:-0.2px;white-space:nowrap;">7</div>
<div style="position:absolute;right:436px;top:262.88px;font-size:22px;line-height:29px;color:#2a2a2a;font-weight:normal;letter-spacing:-0.2px;white-space:nowrap;">25.00</div>
<div style="position:absolute;left:1488.5px;top:262.88px;font-size:22px;line-height:29px;color:#2a2a2a;font-weight:normal;letter-spacing:-0.2px;white-space:nowrap;">CHF</div>
<div style="position:absolute;left:1608px;top:262.88px;font-size:22px;line-height:29px;color:#2a2a2a;font-weight:normal;letter-spacing:-0.2px;white-space:nowrap;">Versandprodukte</div>
<div style="position:absolute;left:413px;top:299px;width:1500px;height:42px;background:#fbfbfb;border-bottom:2px solid #ececec;"></div>
<div style="position:absolute;left:413px;top:299px;width:50px;height:41px;background:linear-gradient(90deg,#e9e9e9,#f1f1f1);border-right:1px solid #d6d6d6;"></div>
<div style="position:absolute;left:476px;top:304.88px;font-size:22px;line-height:29px;color:#2a2a2a;font-weight:normal;letter-spacing:-0.2px;white-space:nowrap;">A-00002</div>
<div style="position:absolute;left:648.5px;top:304.88px;font-size:22px;line-height:29px;color:#2a2a2a;font-weight:normal;letter-spacing:-0.2px;white-space:nowrap;">Couverts C5 20x "Print Mond"</div>
<div style="position:absolute;right:630px;top:304.88px;font-size:22px;line-height:29px;color:#1fae32;font-weight:normal;letter-spacing:-0.2px;white-space:nowrap;">10006</div>
<div style="position:absolute;right:436px;top:304.88px;font-size:22px;line-height:29px;color:#2a2a2a;font-weight:normal;letter-spacing:-0.2px;white-space:nowrap;">25.00</div>
<div style="position:absolute;left:1488.5px;top:304.88px;font-size:22px;line-height:29px;color:#2a2a2a;font-weight:normal;letter-spacing:-0.2px;white-space:nowrap;">CHF</div>
<div style="position:absolute;left:1608px;top:304.88px;font-size:22px;line-height:29px;color:#2a2a2a;font-weight:normal;letter-spacing:-0.2px;white-space:nowrap;">Versandprodukte</div>
<div style="position:absolute;left:413px;top:341px;width:1500px;height:42px;background:#fff;border-bottom:2px solid #ececec;"></div>
<div style="position:absolute;left:413px;top:341px;width:50px;height:41px;background:linear-gradient(90deg,#e9e9e9,#f1f1f1);border-right:1px solid #d6d6d6;"></div>
<div style="position:absolute;left:476px;top:346.88px;font-size:22px;line-height:29px;color:#2a2a2a;font-weight:normal;letter-spacing:-0.2px;white-space:nowrap;">A-00003</div>
<div style="position:absolute;left:648.5px;top:346.88px;font-size:22px;line-height:29px;color:#2a2a2a;font-weight:normal;letter-spacing:-0.2px;white-space:nowrap;">Couverts C5 20x "Print Wasser"</div>
<div style="position:absolute;right:630px;top:346.88px;font-size:22px;line-height:29px;color:#1fae32;font-weight:normal;letter-spacing:-0.2px;white-space:nowrap;">10</div>
<div style="position:absolute;right:436px;top:346.88px;font-size:22px;line-height:29px;color:#2a2a2a;font-weight:normal;letter-spacing:-0.2px;white-space:nowrap;">25.00</div>
<div style="position:absolute;left:1488.5px;top:346.88px;font-size:22px;line-height:29px;color:#2a2a2a;font-weight:normal;letter-spacing:-0.2px;white-space:nowrap;">CHF</div>
<div style="position:absolute;left:1608px;top:346.88px;font-size:22px;line-height:29px;color:#2a2a2a;font-weight:normal;letter-spacing:-0.2px;white-space:nowrap;">Versandprodukte</div>
<div style="position:absolute;left:413px;top:383px;width:1500px;height:42px;background:#fbfbfb;border-bottom:2px solid #ececec;"></div>
<div style="position:absolute;left:413px;top:383px;width:50px;height:41px;background:linear-gradient(90deg,#e9e9e9,#f1f1f1);border-right:1px solid #d6d6d6;"></div>
<div style="position:absolute;left:476px;top:388.88px;font-size:22px;line-height:29px;color:#2a2a2a;font-weight:normal;letter-spacing:-0.2px;white-space:nowrap;">A-00004</div>
<div style="position:absolute;left:648.5px;top:388.88px;font-size:22px;line-height:29px;color:#2a2a2a;font-weight:normal;letter-spacing:-0.2px;white-space:nowrap;">Möwe Slim liner SW</div>
<div style="position:absolute;right:630px;top:388.88px;font-size:22px;line-height:29px;color:#1fae32;font-weight:normal;letter-spacing:-0.2px;white-space:nowrap;">1250</div>
<div style="position:absolute;right:436px;top:388.88px;font-size:22px;line-height:29px;color:#2a2a2a;font-weight:normal;letter-spacing:-0.2px;white-space:nowrap;">1.95</div>
<div style="position:absolute;left:1488.5px;top:388.88px;font-size:22px;line-height:29px;color:#2a2a2a;font-weight:normal;letter-spacing:-0.2px;white-space:nowrap;">CHF</div>
<div style="position:absolute;left:1608px;top:388.88px;font-size:22px;line-height:29px;color:#2a2a2a;font-weight:normal;letter-spacing:-0.2px;white-space:nowrap;">Schreibwaren</div>
<div style="position:absolute;left:413px;top:425px;width:1500px;height:42px;background:#fff;border-bottom:2px solid #ececec;"></div>
<div style="position:absolute;left:413px;top:425px;width:50px;height:41px;background:linear-gradient(90deg,#e9e9e9,#f1f1f1);border-right:1px solid #d6d6d6;"></div>
<div style="position:absolute;left:476px;top:430.88px;font-size:22px;line-height:29px;color:#2a2a2a;font-weight:normal;letter-spacing:-0.2px;white-space:nowrap;">A-00005</div>
<div style="position:absolute;left:648.5px;top:430.88px;font-size:22px;line-height:29px;color:#2a2a2a;font-weight:normal;letter-spacing:-0.2px;white-space:nowrap;">Möwe Slim liner BL</div>
<div style="position:absolute;right:630px;top:430.88px;font-size:22px;line-height:29px;color:#1fae32;font-weight:normal;letter-spacing:-0.2px;white-space:nowrap;">800</div>
<div style="position:absolute;right:436px;top:430.88px;font-size:22px;line-height:29px;color:#2a2a2a;font-weight:normal;letter-spacing:-0.2px;white-space:nowrap;">1.95</div>
<div style="position:absolute;left:1488.5px;top:430.88px;font-size:22px;line-height:29px;color:#2a2a2a;font-weight:normal;letter-spacing:-0.2px;white-space:nowrap;">CHF</div>
<div style="position:absolute;left:1608px;top:430.88px;font-size:22px;line-height:29px;color:#2a2a2a;font-weight:normal;letter-spacing:-0.2px;white-space:nowrap;">Schreibwaren</div>
<div style="position:absolute;left:413px;top:467px;width:1500px;height:42px;background:#fbfbfb;border-bottom:2px solid #ececec;"></div>
<div style="position:absolute;left:413px;top:467px;width:50px;height:41px;background:linear-gradient(90deg,#e9e9e9,#f1f1f1);border-right:1px solid #d6d6d6;"></div>
<div style="position:absolute;left:476px;top:472.88px;font-size:22px;line-height:29px;color:#2a2a2a;font-weight:normal;letter-spacing:-0.2px;white-space:nowrap;">A-00006</div>
<div style="position:absolute;left:648.5px;top:472.88px;font-size:22px;line-height:29px;color:#2a2a2a;font-weight:normal;letter-spacing:-0.2px;white-space:nowrap;">Möwe Slim liner RT</div>
<div style="position:absolute;right:630px;top:472.88px;font-size:22px;line-height:29px;color:#1fae32;font-weight:normal;letter-spacing:-0.2px;white-space:nowrap;">650</div>
<div style="position:absolute;right:436px;top:472.88px;font-size:22px;line-height:29px;color:#2a2a2a;font-weight:normal;letter-spacing:-0.2px;white-space:nowrap;">1.95</div>
<div style="position:absolute;left:1488.5px;top:472.88px;font-size:22px;line-height:29px;color:#2a2a2a;font-weight:normal;letter-spacing:-0.2px;white-space:nowrap;">CHF</div>
<div style="position:absolute;left:1608px;top:472.88px;font-size:22px;line-height:29px;color:#2a2a2a;font-weight:normal;letter-spacing:-0.2px;white-space:nowrap;">Schreibwaren</div>
<div style="position:absolute;left:413px;top:509px;width:1500px;height:42px;background:#fff;border-bottom:2px solid #ececec;"></div>
<div style="position:absolute;left:413px;top:509px;width:50px;height:41px;background:linear-gradient(90deg,#e9e9e9,#f1f1f1);border-right:1px solid #d6d6d6;"></div>
<div style="position:absolute;left:476px;top:514.88px;font-size:22px;line-height:29px;color:#2a2a2a;font-weight:normal;letter-spacing:-0.2px;white-space:nowrap;">A-00007</div>
<div style="position:absolute;left:648.5px;top:514.88px;font-size:22px;line-height:29px;color:#2a2a2a;font-weight:normal;letter-spacing:-0.2px;white-space:nowrap;">Möwe Marker</div>
<div style="position:absolute;right:630px;top:514.88px;font-size:22px;line-height:29px;color:#1fae32;font-weight:normal;letter-spacing:-0.2px;white-space:nowrap;">420</div>
<div style="position:absolute;right:436px;top:514.88px;font-size:22px;line-height:29px;color:#2a2a2a;font-weight:normal;letter-spacing:-0.2px;white-space:nowrap;">2.50</div>
<div style="position:absolute;left:1488.5px;top:514.88px;font-size:22px;line-height:29px;color:#2a2a2a;font-weight:normal;letter-spacing:-0.2px;white-space:nowrap;">CHF</div>
<div style="position:absolute;left:1608px;top:514.88px;font-size:22px;line-height:29px;color:#2a2a2a;font-weight:normal;letter-spacing:-0.2px;white-space:nowrap;">Schreibwaren</div>
<div style="position:absolute;left:413px;top:551px;width:1500px;height:42px;background:#fbfbfb;border-bottom:2px solid #ececec;"></div>
<div style="position:absolute;left:413px;top:551px;width:50px;height:41px;background:linear-gradient(90deg,#e9e9e9,#f1f1f1);border-right:1px solid #d6d6d6;"></div>
<div style="position:absolute;left:476px;top:556.88px;font-size:22px;line-height:29px;color:#2a2a2a;font-weight:normal;letter-spacing:-0.2px;white-space:nowrap;">A-00008</div>
<div style="position:absolute;left:648.5px;top:556.88px;font-size:22px;line-height:29px;color:#2a2a2a;font-weight:normal;letter-spacing:-0.2px;white-space:nowrap;">Toner HP schwarz</div>
<div style="position:absolute;right:630px;top:556.88px;font-size:22px;line-height:29px;color:#1fae32;font-weight:normal;letter-spacing:-0.2px;white-space:nowrap;">12</div>
<div style="position:absolute;right:436px;top:556.88px;font-size:22px;line-height:29px;color:#2a2a2a;font-weight:normal;letter-spacing:-0.2px;white-space:nowrap;">89.00</div>
<div style="position:absolute;left:1488.5px;top:556.88px;font-size:22px;line-height:29px;color:#2a2a2a;font-weight:normal;letter-spacing:-0.2px;white-space:nowrap;">CHF</div>
<div style="position:absolute;left:1608px;top:556.88px;font-size:22px;line-height:29px;color:#2a2a2a;font-weight:normal;letter-spacing:-0.2px;white-space:nowrap;">IT Verbrauchsmaterial</div>
<div style="position:absolute;left:413px;top:593px;width:1500px;height:42px;background:#fff;border-bottom:2px solid #ececec;"></div>
<div style="position:absolute;left:413px;top:593px;width:50px;height:41px;background:linear-gradient(90deg,#e9e9e9,#f1f1f1);border-right:1px solid #d6d6d6;"></div>
<div style="position:absolute;left:476px;top:598.88px;font-size:22px;line-height:29px;color:#2a2a2a;font-weight:normal;letter-spacing:-0.2px;white-space:nowrap;">A-00009</div>
<div style="position:absolute;left:648.5px;top:598.88px;font-size:22px;line-height:29px;color:#2a2a2a;font-weight:normal;letter-spacing:-0.2px;white-space:nowrap;">Toner HP cyan</div>
<div style="position:absolute;right:630px;top:598.88px;font-size:22px;line-height:29px;color:#1fae32;font-weight:normal;letter-spacing:-0.2px;white-space:nowrap;">8</div>
<div style="position:absolute;right:436px;top:598.88px;font-size:22px;line-height:29px;color:#2a2a2a;font-weight:normal;letter-spacing:-0.2px;white-space:nowrap;">95.00</div>
<div style="position:absolute;left:1488.5px;top:598.88px;font-size:22px;line-height:29px;color:#2a2a2a;font-weight:normal;letter-spacing:-0.2px;white-space:nowrap;">CHF</div>
<div style="position:absolute;left:1608px;top:598.88px;font-size:22px;line-height:29px;color:#2a2a2a;font-weight:normal;letter-spacing:-0.2px;white-space:nowrap;">IT Verbrauchsmaterial</div>
<div style="position:absolute;left:413px;top:635px;width:1500px;height:42px;background:#fbfbfb;border-bottom:2px solid #ececec;"></div>
<div style="position:absolute;left:413px;top:635px;width:50px;height:41px;background:linear-gradient(90deg,#e9e9e9,#f1f1f1);border-right:1px solid #d6d6d6;"></div>
<div style="position:absolute;left:476px;top:640.88px;font-size:22px;line-height:29px;color:#2a2a2a;font-weight:normal;letter-spacing:-0.2px;white-space:nowrap;">A-00010</div>
<div style="position:absolute;left:648.5px;top:640.88px;font-size:22px;line-height:29px;color:#2a2a2a;font-weight:normal;letter-spacing:-0.2px;white-space:nowrap;">Toner HP magenta</div>
<div style="position:absolute;right:630px;top:640.88px;font-size:22px;line-height:29px;color:#1fae32;font-weight:normal;letter-spacing:-0.2px;white-space:nowrap;">9</div>
<div style="position:absolute;right:436px;top:640.88px;font-size:22px;line-height:29px;color:#2a2a2a;font-weight:normal;letter-spacing:-0.2px;white-space:nowrap;">95.00</div>
<div style="position:absolute;left:1488.5px;top:640.88px;font-size:22px;line-height:29px;color:#2a2a2a;font-weight:normal;letter-spacing:-0.2px;white-space:nowrap;">CHF</div>
<div style="position:absolute;left:1608px;top:640.88px;font-size:22px;line-height:29px;color:#2a2a2a;font-weight:normal;letter-spacing:-0.2px;white-space:nowrap;">IT Verbrauchsmaterial</div>
<div style="position:absolute;left:413px;top:677px;width:1500px;height:42px;background:#fff;border-bottom:2px solid #ececec;"></div>
<div style="position:absolute;left:413px;top:677px;width:50px;height:41px;background:linear-gradient(90deg,#e9e9e9,#f1f1f1);border-right:1px solid #d6d6d6;"></div>
<div style="position:absolute;left:476px;top:682.88px;font-size:22px;line-height:29px;color:#2a2a2a;font-weight:normal;letter-spacing:-0.2px;white-space:nowrap;">A-00011</div>
<div style="position:absolute;left:648.5px;top:682.88px;font-size:22px;line-height:29px;color:#2a2a2a;font-weight:normal;letter-spacing:-0.2px;white-space:nowrap;">Couverts C4</div>
<div style="position:absolute;right:630px;top:682.88px;font-size:22px;line-height:29px;color:#1fae32;font-weight:normal;letter-spacing:-0.2px;white-space:nowrap;">300</div>
<div style="position:absolute;right:436px;top:682.88px;font-size:22px;line-height:29px;color:#2a2a2a;font-weight:normal;letter-spacing:-0.2px;white-space:nowrap;">35.00</div>
<div style="position:absolute;left:1488.5px;top:682.88px;font-size:22px;line-height:29px;color:#2a2a2a;font-weight:normal;letter-spacing:-0.2px;white-space:nowrap;">CHF</div>
<div style="position:absolute;left:1608px;top:682.88px;font-size:22px;line-height:29px;color:#2a2a2a;font-weight:normal;letter-spacing:-0.2px;white-space:nowrap;">Versandprodukte</div>
<div style="position:absolute;left:413px;top:719px;width:1500px;height:42px;background:#fbfbfb;border-bottom:2px solid #ececec;"></div>
<div style="position:absolute;left:413px;top:719px;width:50px;height:41px;background:linear-gradient(90deg,#e9e9e9,#f1f1f1);border-right:1px solid #d6d6d6;"></div>
<div style="position:absolute;left:476px;top:724.88px;font-size:22px;line-height:29px;color:#2a2a2a;font-weight:normal;letter-spacing:-0.2px;white-space:nowrap;">A-00012</div>
<div style="position:absolute;left:648.5px;top:724.88px;font-size:22px;line-height:29px;color:#2a2a2a;font-weight:normal;letter-spacing:-0.2px;white-space:nowrap;">Couverts C6</div>
<div style="position:absolute;right:630px;top:724.88px;font-size:22px;line-height:29px;color:#1fae32;font-weight:normal;letter-spacing:-0.2px;white-space:nowrap;">250</div>
<div style="position:absolute;right:436px;top:724.88px;font-size:22px;line-height:29px;color:#2a2a2a;font-weight:normal;letter-spacing:-0.2px;white-space:nowrap;">15.00</div>
<div style="position:absolute;left:1488.5px;top:724.88px;font-size:22px;line-height:29px;color:#2a2a2a;font-weight:normal;letter-spacing:-0.2px;white-space:nowrap;">CHF</div>
<div style="position:absolute;left:1608px;top:724.88px;font-size:22px;line-height:29px;color:#2a2a2a;font-weight:normal;letter-spacing:-0.2px;white-space:nowrap;">Versandprodukte</div>
<div style="position:absolute;left:413px;top:761px;width:1500px;height:42px;background:#fff;border-bottom:2px solid #ececec;"></div>
<div style="position:absolute;left:413px;top:761px;width:50px;height:41px;background:linear-gradient(90deg,#e9e9e9,#f1f1f1);border-right:1px solid #d6d6d6;"></div>
<div style="position:absolute;left:476px;top:766.88px;font-size:22px;line-height:29px;color:#2a2a2a;font-weight:normal;letter-spacing:-0.2px;white-space:nowrap;">A-00013</div>
<div style="position:absolute;left:648.5px;top:766.88px;font-size:22px;line-height:29px;color:#2a2a2a;font-weight:normal;letter-spacing:-0.2px;white-space:nowrap;">Produkt A</div>
<div style="position:absolute;right:630px;top:766.88px;font-size:22px;line-height:29px;color:#1fae32;font-weight:normal;letter-spacing:-0.2px;white-space:nowrap;">10</div>
<div style="position:absolute;right:436px;top:766.88px;font-size:22px;line-height:29px;color:#2a2a2a;font-weight:normal;letter-spacing:-0.2px;white-space:nowrap;">120.00</div>
<div style="position:absolute;left:1488.5px;top:766.88px;font-size:22px;line-height:29px;color:#2a2a2a;font-weight:normal;letter-spacing:-0.2px;white-space:nowrap;">CHF</div>
<div style="position:absolute;left:1608px;top:766.88px;font-size:22px;line-height:29px;color:#2a2a2a;font-weight:normal;letter-spacing:-0.2px;white-space:nowrap;">Produkte</div>
<div style="position:absolute;left:413px;top:803px;width:1500px;height:42px;background:#fbfbfb;border-bottom:2px solid #ececec;"></div>
<div style="position:absolute;left:413px;top:803px;width:50px;height:41px;background:linear-gradient(90deg,#e9e9e9,#f1f1f1);border-right:1px solid #d6d6d6;"></div>
<div style="position:absolute;left:476px;top:808.88px;font-size:22px;line-height:29px;color:#2a2a2a;font-weight:normal;letter-spacing:-0.2px;white-space:nowrap;">A-00014</div>
<div style="position:absolute;left:648.5px;top:808.88px;font-size:22px;line-height:29px;color:#2a2a2a;font-weight:normal;letter-spacing:-0.2px;white-space:nowrap;">Produkt B</div>
<div style="position:absolute;right:630px;top:808.88px;font-size:22px;line-height:29px;color:#1fae32;font-weight:normal;letter-spacing:-0.2px;white-space:nowrap;">10</div>
<div style="position:absolute;right:436px;top:808.88px;font-size:22px;line-height:29px;color:#2a2a2a;font-weight:normal;letter-spacing:-0.2px;white-space:nowrap;">140.00</div>
<div style="position:absolute;left:1488.5px;top:808.88px;font-size:22px;line-height:29px;color:#2a2a2a;font-weight:normal;letter-spacing:-0.2px;white-space:nowrap;">CHF</div>
<div style="position:absolute;left:1608px;top:808.88px;font-size:22px;line-height:29px;color:#2a2a2a;font-weight:normal;letter-spacing:-0.2px;white-space:nowrap;">Produkte</div>
<div style="position:absolute;left:413px;top:845px;width:1500px;height:42px;background:#fff;border-bottom:2px solid #ececec;"></div>
<div style="position:absolute;left:413px;top:845px;width:50px;height:41px;background:linear-gradient(90deg,#e9e9e9,#f1f1f1);border-right:1px solid #d6d6d6;"></div>
<div style="position:absolute;left:476px;top:850.88px;font-size:22px;line-height:29px;color:#2a2a2a;font-weight:normal;letter-spacing:-0.2px;white-space:nowrap;">A-00015</div>
<div style="position:absolute;left:648.5px;top:850.88px;font-size:22px;line-height:29px;color:#2a2a2a;font-weight:normal;letter-spacing:-0.2px;white-space:nowrap;">Produkt C</div>
<div style="position:absolute;right:630px;top:850.88px;font-size:22px;line-height:29px;color:#1fae32;font-weight:normal;letter-spacing:-0.2px;white-space:nowrap;">10</div>
<div style="position:absolute;right:436px;top:850.88px;font-size:22px;line-height:29px;color:#2a2a2a;font-weight:normal;letter-spacing:-0.2px;white-space:nowrap;">160.00</div>
<div style="position:absolute;left:1488.5px;top:850.88px;font-size:22px;line-height:29px;color:#2a2a2a;font-weight:normal;letter-spacing:-0.2px;white-space:nowrap;">CHF</div>
<div style="position:absolute;left:1608px;top:850.88px;font-size:22px;line-height:29px;color:#2a2a2a;font-weight:normal;letter-spacing:-0.2px;white-space:nowrap;">Produkte</div>
<div style="position:absolute;left:413px;top:887px;width:1500px;height:42px;background:#fbfbfb;border-bottom:2px solid #ececec;"></div>
<div style="position:absolute;left:413px;top:887px;width:50px;height:41px;background:linear-gradient(90deg,#e9e9e9,#f1f1f1);border-right:1px solid #d6d6d6;"></div>
<div style="position:absolute;left:476px;top:892.88px;font-size:22px;line-height:29px;color:#2a2a2a;font-weight:normal;letter-spacing:-0.2px;white-space:nowrap;">A-00016</div>
<div style="position:absolute;left:648.5px;top:892.88px;font-size:22px;line-height:29px;color:#2a2a2a;font-weight:normal;letter-spacing:-0.2px;white-space:nowrap;">Produkt D</div>
<div style="position:absolute;right:630px;top:892.88px;font-size:22px;line-height:29px;color:#1fae32;font-weight:normal;letter-spacing:-0.2px;white-space:nowrap;">10</div>
<div style="position:absolute;right:436px;top:892.88px;font-size:22px;line-height:29px;color:#2a2a2a;font-weight:normal;letter-spacing:-0.2px;white-space:nowrap;">180.00</div>
<div style="position:absolute;left:1488.5px;top:892.88px;font-size:22px;line-height:29px;color:#2a2a2a;font-weight:normal;letter-spacing:-0.2px;white-space:nowrap;">CHF</div>
<div style="position:absolute;left:1608px;top:892.88px;font-size:22px;line-height:29px;color:#2a2a2a;font-weight:normal;letter-spacing:-0.2px;white-space:nowrap;">Produkte</div>
<div style="position:absolute;left:413px;top:929px;width:1500px;height:42px;background:#fff;border-bottom:2px solid #ececec;"></div>
<div style="position:absolute;left:413px;top:929px;width:50px;height:41px;background:linear-gradient(90deg,#e9e9e9,#f1f1f1);border-right:1px solid #d6d6d6;"></div>
<div style="position:absolute;left:476px;top:934.88px;font-size:22px;line-height:29px;color:#2a2a2a;font-weight:normal;letter-spacing:-0.2px;white-space:nowrap;">A-00017</div>
<div style="position:absolute;left:648.5px;top:934.88px;font-size:22px;line-height:29px;color:#2a2a2a;font-weight:normal;letter-spacing:-0.2px;white-space:nowrap;">Produkt E</div>
<div style="position:absolute;right:630px;top:934.88px;font-size:22px;line-height:29px;color:#1fae32;font-weight:normal;letter-spacing:-0.2px;white-space:nowrap;">10</div>
<div style="position:absolute;right:436px;top:934.88px;font-size:22px;line-height:29px;color:#2a2a2a;font-weight:normal;letter-spacing:-0.2px;white-space:nowrap;">200.00</div>
<div style="position:absolute;left:1488.5px;top:934.88px;font-size:22px;line-height:29px;color:#2a2a2a;font-weight:normal;letter-spacing:-0.2px;white-space:nowrap;">CHF</div>
<div style="position:absolute;left:1608px;top:934.88px;font-size:22px;line-height:29px;color:#2a2a2a;font-weight:normal;letter-spacing:-0.2px;white-space:nowrap;">Produkte</div>
<div style="position:absolute;left:413px;top:971px;width:1500px;height:42px;background:#fbfbfb;border-bottom:2px solid #ececec;"></div>
<div style="position:absolute;left:413px;top:971px;width:50px;height:41px;background:linear-gradient(90deg,#e9e9e9,#f1f1f1);border-right:1px solid #d6d6d6;"></div>
<div style="position:absolute;left:476px;top:976.88px;font-size:22px;line-height:29px;color:#2a2a2a;font-weight:normal;letter-spacing:-0.2px;white-space:nowrap;">A-00018</div>
<div style="position:absolute;left:648.5px;top:976.88px;font-size:22px;line-height:29px;color:#2a2a2a;font-weight:normal;letter-spacing:-0.2px;white-space:nowrap;">Artikel</div>
<div style="position:absolute;right:436px;top:976.88px;font-size:22px;line-height:29px;color:#2a2a2a;font-weight:normal;letter-spacing:-0.2px;white-space:nowrap;">10.00</div>
<div style="position:absolute;left:1488.5px;top:976.88px;font-size:22px;line-height:29px;color:#2a2a2a;font-weight:normal;letter-spacing:-0.2px;white-space:nowrap;">CHF</div>
<div style="position:absolute;left:413px;top:1013px;width:1500px;height:42px;background:#fff;border-bottom:2px solid #ececec;"></div>
<div style="position:absolute;left:413px;top:1013px;width:50px;height:41px;background:linear-gradient(90deg,#e9e9e9,#f1f1f1);border-right:1px solid #d6d6d6;"></div>
<div style="position:absolute;left:476px;top:1018.88px;font-size:22px;line-height:29px;color:#2a2a2a;font-weight:normal;letter-spacing:-0.2px;white-space:nowrap;">A-00019</div>
<div style="position:absolute;left:648.5px;top:1018.88px;font-size:22px;line-height:29px;color:#2a2a2a;font-weight:normal;letter-spacing:-0.2px;white-space:nowrap;">Artikel</div>
<div style="position:absolute;right:436px;top:1018.88px;font-size:22px;line-height:29px;color:#2a2a2a;font-weight:normal;letter-spacing:-0.2px;white-space:nowrap;">10.00</div>
<div style="position:absolute;left:1488.5px;top:1018.88px;font-size:22px;line-height:29px;color:#2a2a2a;font-weight:normal;letter-spacing:-0.2px;white-space:nowrap;">CHF</div>
<div style="position:absolute;left:413px;top:1055px;width:1500px;height:42px;background:#fbfbfb;border-bottom:2px solid #ececec;"></div>
<div style="position:absolute;left:413px;top:1055px;width:50px;height:41px;background:linear-gradient(90deg,#e9e9e9,#f1f1f1);border-right:1px solid #d6d6d6;"></div>
<div style="position:absolute;left:476px;top:1060.88px;font-size:22px;line-height:29px;color:#2a2a2a;font-weight:normal;letter-spacing:-0.2px;white-space:nowrap;">A-00020</div>
<div style="position:absolute;left:648.5px;top:1060.88px;font-size:22px;line-height:29px;color:#2a2a2a;font-weight:normal;letter-spacing:-0.2px;white-space:nowrap;">Artikel</div>
<div style="position:absolute;right:436px;top:1060.88px;font-size:22px;line-height:29px;color:#2a2a2a;font-weight:normal;letter-spacing:-0.2px;white-space:nowrap;">10.00</div>
<div style="position:absolute;left:1488.5px;top:1060.88px;font-size:22px;line-height:29px;color:#2a2a2a;font-weight:normal;letter-spacing:-0.2px;white-space:nowrap;">CHF</div>
<div style="position:absolute;left:413px;top:1097px;width:1500px;height:42px;background:#fff;border-bottom:2px solid #ececec;"></div>
<div style="position:absolute;left:413px;top:1097px;width:50px;height:41px;background:linear-gradient(90deg,#e9e9e9,#f1f1f1);border-right:1px solid #d6d6d6;"></div>
<div style="position:absolute;left:476px;top:1102.88px;font-size:22px;line-height:29px;color:#2a2a2a;font-weight:normal;letter-spacing:-0.2px;white-space:nowrap;">A-00021</div>
<div style="position:absolute;left:648.5px;top:1102.88px;font-size:22px;line-height:29px;color:#2a2a2a;font-weight:normal;letter-spacing:-0.2px;white-space:nowrap;">Artikel</div>
<div style="position:absolute;right:436px;top:1102.88px;font-size:22px;line-height:29px;color:#2a2a2a;font-weight:normal;letter-spacing:-0.2px;white-space:nowrap;">10.00</div>
<div style="position:absolute;left:1488.5px;top:1102.88px;font-size:22px;line-height:29px;color:#2a2a2a;font-weight:normal;letter-spacing:-0.2px;white-space:nowrap;">CHF</div>
<div style="position:absolute;left:413px;top:1139px;width:1500px;height:42px;background:#fbfbfb;border-bottom:2px solid #ececec;"></div>
<div style="position:absolute;left:413px;top:1139px;width:50px;height:41px;background:linear-gradient(90deg,#e9e9e9,#f1f1f1);border-right:1px solid #d6d6d6;"></div>
<div style="position:absolute;left:476px;top:1144.88px;font-size:22px;line-height:29px;color:#2a2a2a;font-weight:normal;letter-spacing:-0.2px;white-space:nowrap;">A-00022</div>
<div style="position:absolute;left:648.5px;top:1144.88px;font-size:22px;line-height:29px;color:#2a2a2a;font-weight:normal;letter-spacing:-0.2px;white-space:nowrap;">Artikel</div>
<div style="position:absolute;right:436px;top:1144.88px;font-size:22px;line-height:29px;color:#2a2a2a;font-weight:normal;letter-spacing:-0.2px;white-space:nowrap;">10.00</div>
<div style="position:absolute;left:1488.5px;top:1144.88px;font-size:22px;line-height:29px;color:#2a2a2a;font-weight:normal;letter-spacing:-0.2px;white-space:nowrap;">CHF</div>
<div style="position:absolute;left:413px;top:1181px;width:1500px;height:42px;background:#fff;border-bottom:2px solid #ececec;"></div>
<div style="position:absolute;left:413px;top:1181px;width:50px;height:41px;background:linear-gradient(90deg,#e9e9e9,#f1f1f1);border-right:1px solid #d6d6d6;"></div>
<div style="position:absolute;left:476px;top:1186.88px;font-size:22px;line-height:29px;color:#2a2a2a;font-weight:normal;letter-spacing:-0.2px;white-space:nowrap;">A-00023</div>
<div style="position:absolute;left:648.5px;top:1186.88px;font-size:22px;line-height:29px;color:#2a2a2a;font-weight:normal;letter-spacing:-0.2px;white-space:nowrap;">Sitzbezug</div>
<div style="position:absolute;right:630px;top:1186.88px;font-size:22px;line-height:29px;color:#1fae32;font-weight:normal;letter-spacing:-0.2px;white-space:nowrap;">4</div>
<div style="position:absolute;right:436px;top:1186.88px;font-size:22px;line-height:29px;color:#2a2a2a;font-weight:normal;letter-spacing:-0.2px;white-space:nowrap;">220.00</div>
<div style="position:absolute;left:1488.5px;top:1186.88px;font-size:22px;line-height:29px;color:#2a2a2a;font-weight:normal;letter-spacing:-0.2px;white-space:nowrap;">CHF</div>
<div style="position:absolute;left:1608px;top:1186.88px;font-size:22px;line-height:29px;color:#2a2a2a;font-weight:normal;letter-spacing:-0.2px;white-space:nowrap;">Sitzbezüge</div>
<div style="position:absolute;left:413px;top:1223px;width:1500px;height:42px;background:#fbfbfb;border-bottom:2px solid #ececec;"></div>
<div style="position:absolute;left:413px;top:1223px;width:50px;height:41px;background:linear-gradient(90deg,#e9e9e9,#f1f1f1);border-right:1px solid #d6d6d6;"></div>
<div style="position:absolute;left:476px;top:1228.88px;font-size:22px;line-height:29px;color:#2a2a2a;font-weight:normal;letter-spacing:-0.2px;white-space:nowrap;">A-00024</div>
<div style="position:absolute;left:648.5px;top:1228.88px;font-size:22px;line-height:29px;color:#2a2a2a;font-weight:normal;letter-spacing:-0.2px;white-space:nowrap;">Artikel</div>
<div style="position:absolute;right:436px;top:1228.88px;font-size:22px;line-height:29px;color:#2a2a2a;font-weight:normal;letter-spacing:-0.2px;white-space:nowrap;">10.00</div>
<div style="position:absolute;left:1488.5px;top:1228.88px;font-size:22px;line-height:29px;color:#2a2a2a;font-weight:normal;letter-spacing:-0.2px;white-space:nowrap;">CHF</div>
<div style="position:absolute;left:413px;top:1265px;width:1500px;height:42px;background:#fff;border-bottom:2px solid #ececec;"></div>
<div style="position:absolute;left:413px;top:1265px;width:50px;height:41px;background:linear-gradient(90deg,#e9e9e9,#f1f1f1);border-right:1px solid #d6d6d6;"></div>
<div style="position:absolute;left:476px;top:1270.88px;font-size:22px;line-height:29px;color:#2a2a2a;font-weight:normal;letter-spacing:-0.2px;white-space:nowrap;">S-00001</div>
<div style="position:absolute;left:648.5px;top:1270.88px;font-size:22px;line-height:29px;color:#2a2a2a;font-weight:normal;letter-spacing:-0.2px;white-space:nowrap;">Grafik Design</div>
<div style="position:absolute;right:436px;top:1270.88px;font-size:22px;line-height:29px;color:#2a2a2a;font-weight:normal;letter-spacing:-0.2px;white-space:nowrap;">120.00</div>
<div style="position:absolute;left:1488.5px;top:1270.88px;font-size:22px;line-height:29px;color:#2a2a2a;font-weight:normal;letter-spacing:-0.2px;white-space:nowrap;">CHF</div>
<div style="position:absolute;left:1608px;top:1270.88px;font-size:22px;line-height:29px;color:#2a2a2a;font-weight:normal;letter-spacing:-0.2px;white-space:nowrap;">Grafische Dienstleistungen</div>
<div style="position:absolute;left:413px;top:1307px;width:1500px;height:42px;background:#fbfbfb;border-bottom:2px solid #ececec;"></div>
<div style="position:absolute;left:413px;top:1307px;width:50px;height:41px;background:linear-gradient(90deg,#e9e9e9,#f1f1f1);border-right:1px solid #d6d6d6;"></div>
<div style="position:absolute;left:476px;top:1312.88px;font-size:22px;line-height:29px;color:#2a2a2a;font-weight:normal;letter-spacing:-0.2px;white-space:nowrap;">S-00002</div>
<div style="position:absolute;left:648.5px;top:1312.88px;font-size:22px;line-height:29px;color:#2a2a2a;font-weight:normal;letter-spacing:-0.2px;white-space:nowrap;">Programmierung</div>
<div style="position:absolute;right:436px;top:1312.88px;font-size:22px;line-height:29px;color:#2a2a2a;font-weight:normal;letter-spacing:-0.2px;white-space:nowrap;">140.00</div>
<div style="position:absolute;left:1488.5px;top:1312.88px;font-size:22px;line-height:29px;color:#2a2a2a;font-weight:normal;letter-spacing:-0.2px;white-space:nowrap;">CHF</div>
<div style="position:absolute;left:1608px;top:1312.88px;font-size:22px;line-height:29px;color:#2a2a2a;font-weight:normal;letter-spacing:-0.2px;white-space:nowrap;">Web Entwicklung</div>
<div style="position:absolute;left:413px;top:1349px;width:1500px;height:42px;background:#fff;border-bottom:2px solid #ececec;"></div>
<div style="position:absolute;left:413px;top:1349px;width:50px;height:41px;background:linear-gradient(90deg,#e9e9e9,#f1f1f1);border-right:1px solid #d6d6d6;"></div>
<div style="position:absolute;left:476px;top:1354.88px;font-size:22px;line-height:29px;color:#2a2a2a;font-weight:normal;letter-spacing:-0.2px;white-space:nowrap;">S-00003</div>
<div style="position:absolute;left:648.5px;top:1354.88px;font-size:22px;line-height:29px;color:#2a2a2a;font-weight:normal;letter-spacing:-0.2px;white-space:nowrap;">Organisation/Administration</div>
<div style="position:absolute;right:436px;top:1354.88px;font-size:22px;line-height:29px;color:#2a2a2a;font-weight:normal;letter-spacing:-0.2px;white-space:nowrap;">80.00</div>
<div style="position:absolute;left:1488.5px;top:1354.88px;font-size:22px;line-height:29px;color:#2a2a2a;font-weight:normal;letter-spacing:-0.2px;white-space:nowrap;">CHF</div>
<div style="position:absolute;left:1608px;top:1354.88px;font-size:22px;line-height:29px;color:#2a2a2a;font-weight:normal;letter-spacing:-0.2px;white-space:nowrap;">Grafische Dienstleistungen</div>
<div style="position:absolute;left:413px;top:1391px;width:1500px;height:42px;background:#fbfbfb;border-bottom:2px solid #ececec;"></div>
<div style="position:absolute;left:413px;top:1391px;width:50px;height:41px;background:linear-gradient(90deg,#e9e9e9,#f1f1f1);border-right:1px solid #d6d6d6;"></div>
<div style="position:absolute;left:476px;top:1396.88px;font-size:22px;line-height:29px;color:#2a2a2a;font-weight:normal;letter-spacing:-0.2px;white-space:nowrap;">S-00004</div>
<div style="position:absolute;left:648.5px;top:1396.88px;font-size:22px;line-height:29px;color:#2a2a2a;font-weight:normal;letter-spacing:-0.2px;white-space:nowrap;">Lieferung pauschal</div>
<div style="position:absolute;right:436px;top:1396.88px;font-size:22px;line-height:29px;color:#2a2a2a;font-weight:normal;letter-spacing:-0.2px;white-space:nowrap;">25.00</div>
<div style="position:absolute;left:1488.5px;top:1396.88px;font-size:22px;line-height:29px;color:#2a2a2a;font-weight:normal;letter-spacing:-0.2px;white-space:nowrap;">CHF</div>
<div style="position:absolute;left:1608px;top:1396.88px;font-size:22px;line-height:29px;color:#2a2a2a;font-weight:normal;letter-spacing:-0.2px;white-space:nowrap;">Grafische Dienstleistungen</div>
<div style="position:absolute;left:413px;top:1759.5px;width:1500px;height:60px;background:linear-gradient(180deg,#e0e9f8,#d7e3f5);border-top:2px solid #99bbe8;"></div>
<div style="position:absolute;left:-246px;top:-120px;width:0;height:0"><svg style="left:673px;top:1897.5px;" width="22" height="24" viewBox="0 0 22 24"><rect x="0" y="0" width="5.500" height="24" rx="1" fill="#c4c8d0"/><path d="M22 0v24L7.500 12z" fill="#c4c8d0"/></svg></div>
<div style="position:absolute;left:-246px;top:-120px;width:0;height:0"><svg style="left:722px;top:1898px;" width="14.5" height="23" viewBox="0 0 14.5 23"><path d="M14.5 0v23l-14.5 -11.5z" fill="#c4c8d0"/></svg></div>
<div style="position:absolute;left:512px;top:1776px;width:2px;height:28px;background:#8fb2de;"></div>
<div style="position:absolute;left:514px;top:1776px;width:2px;height:28px;background:#fff;opacity:.85"></div>
<div style="position:absolute;left:528px;top:1776.88px;font-size:22px;line-height:29px;color:#3a3a3a;font-weight:normal;letter-spacing:-0.2px;white-space:nowrap;">Seite</div>
<div style="position:absolute;left:592px;top:1768px;width:59px;height:43px;border:2px solid #b5b8c8;background:linear-gradient(180deg,#e4e4e4 0,#fff 8px);"></div>
<div style="position:absolute;left:600px;top:1776.88px;font-size:22px;line-height:29px;color:#222;font-weight:normal;letter-spacing:0px;white-space:nowrap;">1</div>
<div style="position:absolute;left:667.5px;top:1776.88px;font-size:22px;line-height:29px;color:#3a3a3a;font-weight:normal;letter-spacing:-0.2px;white-space:nowrap;">von 1</div>
<div style="position:absolute;left:734px;top:1776px;width:2px;height:28px;background:#8fb2de;"></div>
<div style="position:absolute;left:736px;top:1776px;width:2px;height:28px;background:#fff;opacity:.85"></div>
<div style="position:absolute;left:-246px;top:-120px;width:0;height:0"><svg style="left:1003px;top:1898px;" width="14.5" height="23" viewBox="0 0 14.5 23"><path d="M0 0v23l14.5 -11.5z" fill="#c4c8d0"/></svg></div>
<div style="position:absolute;left:-246px;top:-120px;width:0;height:0"><svg style="left:1046.5px;top:1897.5px;" width="22" height="24" viewBox="0 0 22 24"><rect x="16.500" y="0" width="5.500" height="24" rx="1" fill="#c4c8d0"/><path d="M0 0v24l14.500-12z" fill="#c4c8d0"/></svg></div>
<div style="position:absolute;left:838px;top:1776px;width:2px;height:28px;background:#8fb2de;"></div>
<div style="position:absolute;left:840px;top:1776px;width:2px;height:28px;background:#fff;opacity:.85"></div>
<div style="position:absolute;left:-246px;top:-120px;width:0;height:0"><svg style="left:1100px;top:1895.5px;" width="28.5" height="28.5" viewBox="0 0 28 28"><defs><linearGradient id="g15" x1="0" y1="0" x2="1" y2="1"><stop offset="0" stop-color="#3b8fdc"/><stop offset="1" stop-color="#86bdec"/></linearGradient></defs>
<g transform="translate(14 14) scale(1.220) translate(-14 -14)"><path d="M3.500 11.500C5 4.500 14.500 1.500 20.500 6.500L23.800 3.200L25 14.500L13.700 13.300L17.500 9.500C14.500 7.600 9.200 8.500 7.500 12.500Z" fill="url(#g15)" stroke="#3279c4" stroke-width=".700" stroke-linejoin="round"/>
<path d="M3.500 11.500C5 4.500 14.500 1.500 20.500 6.500L23.800 3.200L25 14.500L13.700 13.300L17.500 9.500C14.500 7.600 9.200 8.500 7.500 12.500Z" fill="url(#g15)" stroke="#3279c4" stroke-width=".700" stroke-linejoin="round" transform="rotate(180 14 14)"/></g></svg></div>
</div>
</div>
<div style="position:absolute;left:0;top:0;width:2126px;height:1938px;background:rgba(0,0,0,0.4)"></div>
<div style="position:absolute;left:0;top:0;width:2126px;height:1938px;will-change:transform"><div style="position:absolute;left:600px;top:540px;width:1210px;height:949px;border-radius:10px;background:linear-gradient(180deg,#b3c4de 0px,#c2d0e4 40px,#cad6e7 90px,#cad6e7 100%);border:2px solid #e4ecf7;box-shadow:0 0 0 1px #9dbce4, 0 0 9px 1px rgba(0,0,0,.38);"></div>
<svg style="left:612px;top:552px;" width="32" height="32" viewBox="0 0 32 32"><path d="M1 1h20l6 6v23.500h-26z" fill="#f8f8f8" stroke="#c4c4c4" stroke-width="1.500" stroke-linejoin="round"/><path d="M21 1v6h6" fill="#e9e9e9" stroke="#c4c4c4" stroke-width="1.200" stroke-linejoin="round"/>
<g transform="translate(5,24.5) rotate(-41.71)">
<path d="M0 0L7 -3.7V3.7Z" fill="#f4dcae" stroke="#c58a3a" stroke-width="1"/><path d="M0 0L2.600 -1.400V1.400Z" fill="#6b5030"/>
<rect x="7" y="-3.7" width="19.31" height="7.4" fill="#f2ae34" stroke="#c9842a" stroke-width="1"/>
<rect x="7" y="-1.300" width="19.31" height="2.600" fill="#fbe27e"/>
<rect x="26.31" y="-3.7" width="4.500" height="7.4" rx="1" fill="#ee9a86" stroke="#c9842a" stroke-width="1"/>
</g></svg>
<div style="position:absolute;left:650.5px;top:551.49px;font-size:26px;line-height:34px;color:#4c4c4c;font-weight:normal;letter-spacing:0.15px;white-space:nowrap;">Artikel bearbeiten</div>
<div style="position:absolute;left:1736px;top:554px;width:29px;height:29px;border:2px solid #a9c4e8;border-radius:6px;background:linear-gradient(180deg,#f3f8fe,#d6e4f6);box-shadow:0 0 0 1px rgba(255,255,255,.6);"><div style="position:absolute;left:0;right:0;top:1px;text-align:center;font-size:21px;line-height:24px;font-weight:bold;color:#4679ad">?</div></div>
<div style="position:absolute;left:1770.5px;top:554px;width:29px;height:29px;border:2px solid #a9c4e8;border-radius:6px;background:linear-gradient(180deg,#f3f8fe,#d6e4f6);box-shadow:0 0 0 1px rgba(255,255,255,.6);"><svg style="left:5px;top:5px" width="15" height="15" viewBox="0 0 16 16"><path d="M1.500 1.500l13 13M14.500 1.500l-13 13" stroke="#3b5ca8" stroke-width="2.200"/></svg></div>
<div style="position:absolute;left:609px;top:639px;width:1194px;height:7px;background:#dfe9f8;border:2px solid #82aee2;border-bottom:none;border-width:2px 2px 0 2px;"></div>
<div style="position:absolute;left:609px;top:644px;width:1194px;height:781px;background:#dae6f4;border:2px solid #82aee2;"></div>
<div style="position:absolute;left:612.3px;top:598.3px;width:119.0px;height:42.700000000000045px;background:linear-gradient(180deg,#ffffff 0%,#e9f2fd 40%,#dbe8f9 100%);border:2px solid #82aee2;border-bottom:none;border-radius:9px 9px 0 0;box-shadow:inset 2px 2px 0 #fff,inset -2px 0 0 #fff;"><div style="position:absolute;left:0;right:0;top:6.500px;text-align:center;font-size:22px;line-height:28px;font-weight:bold;color:#0e3b5c;letter-spacing:.3px;-webkit-text-stroke:.35px #0e3b5c">Eintrag</div></div>
<div style="position:absolute;left:737px;top:598.3px;width:100.5px;height:40.700000000000045px;background:linear-gradient(180deg,#c9dcf4 0%,#d5e5f9 45%,#dbe9fb 100%);border:2px solid #82aee2;border-bottom:none;border-radius:9px 9px 0 0;box-shadow:inset 2px 2px 0 #fbfdff,inset -2px 0 0 #fbfdff;"><div style="position:absolute;left:0;right:0;top:6.500px;text-align:center;font-size:22px;line-height:28px;font-weight:bold;color:#2d5f96;letter-spacing:.3px;-webkit-text-stroke:.35px #2d5f96">Lager</div></div>
<div style="position:absolute;left:844.5px;top:598.3px;width:104.5px;height:40.700000000000045px;background:linear-gradient(180deg,#c9dcf4 0%,#d5e5f9 45%,#dbe9fb 100%);border:2px solid #82aee2;border-bottom:none;border-radius:9px 9px 0 0;box-shadow:inset 2px 2px 0 #fbfdff,inset -2px 0 0 #fbfdff;"><div style="position:absolute;left:0;right:0;top:6.500px;text-align:center;font-size:22px;line-height:28px;font-weight:bold;color:#2d5f96;letter-spacing:.3px;-webkit-text-stroke:.35px #2d5f96">Bilder</div></div>
<div style="position:absolute;left:955px;top:598.3px;width:115.5px;height:40.700000000000045px;background:linear-gradient(180deg,#c9dcf4 0%,#d5e5f9 45%,#dbe9fb 100%);border:2px solid #82aee2;border-bottom:none;border-radius:9px 9px 0 0;box-shadow:inset 2px 2px 0 #fbfdff,inset -2px 0 0 #fbfdff;"><div style="position:absolute;left:0;right:0;top:6.500px;text-align:center;font-size:22px;line-height:28px;font-weight:bold;color:#2d5f96;letter-spacing:.3px;-webkit-text-stroke:.35px #2d5f96">Details</div></div>
<div style="position:absolute;left:1077px;top:598.3px;width:94px;height:40.700000000000045px;background:linear-gradient(180deg,#c9dcf4 0%,#d5e5f9 45%,#dbe9fb 100%);border:2px solid #82aee2;border-bottom:none;border-radius:9px 9px 0 0;box-shadow:inset 2px 2px 0 #fbfdff,inset -2px 0 0 #fbfdff;"><div style="position:absolute;left:0;right:0;top:6.500px;text-align:center;font-size:22px;line-height:28px;font-weight:bold;color:#2d5f96;letter-spacing:.3px;-webkit-text-stroke:.35px #2d5f96">Mehr</div></div>
<div style="position:absolute;left:1179px;top:598.3px;width:55.5px;height:40.700000000000045px;background:linear-gradient(180deg,#c9dcf4 0%,#d5e5f9 45%,#dbe9fb 100%);border:2px solid #82aee2;border-bottom:none;border-radius:9px 9px 0 0;box-shadow:inset 2px 2px 0 #fbfdff,inset -2px 0 0 #fbfdff;"><svg style="left:16.8px;top:11px" width="18" height="18" viewBox="0 0 18 18"><path d="M9 1v16M1 9h16" stroke="#2d5f96" stroke-width="4.400"/></svg></div>
<div style="position:absolute;left:630.5px;top:674.88px;font-size:22px;line-height:29px;color:#34365e;font-weight:normal;letter-spacing:-0.2px;white-space:nowrap;">Kategorie</div>
<div style="position:absolute;left:630px;top:704px;width:528.0px;height:44px;background:linear-gradient(180deg,#e2e5e5 0px,#eef0f0 3px,#fbfbfb 9px,#fff 14px);border:2px solid #a6acc4;border-right:none;"></div><div style="position:absolute;left:637.8px;top:710.98px;font-size:24px;line-height:31px;color:#000;font-weight:normal;letter-spacing:-0.2px;white-space:nowrap;">Versandprodukte</div>
<div style="position:absolute;left:1158px;top:704px;width:35.5px;height:44px;background:linear-gradient(180deg,#f6f6f6 0%,#ececec 30%,#d6d6d6 60%,#cbcbcb 100%);border:2px solid #a6acc4;border-left:2px solid #aeb2c8;box-shadow:inset -1px 1px 0 rgba(255,255,255,.75);border-top-right-radius:4px;"><svg style="left:5.8px;top:13.5px;" width="18.5" height="11" viewBox="0 0 18.5 11"><path d="M0 0H5.10L9.25 4.94L13.40 0H18.5L9.25 11Z" fill="#28508c"/></svg></div>
<div style="position:absolute;left:1214px;top:674.88px;font-size:22px;line-height:29px;color:#34365e;font-weight:normal;letter-spacing:-0.2px;white-space:nowrap;">Artikel-Nr.</div>
<div style="position:absolute;left:1214px;top:704px;width:463.0px;height:44px;background:linear-gradient(180deg,#e2e5e5 0px,#eef0f0 3px,#fbfbfb 9px,#fff 14px);border:2px solid #a6acc4;border-right:none;"></div><div style="position:absolute;left:1221.8px;top:710.98px;font-size:24px;line-height:31px;color:#000;font-weight:normal;letter-spacing:-0.2px;white-space:nowrap;">A-00001</div>
<div style="position:absolute;left:1676.5px;top:704px;width:34.5px;height:44px;background:linear-gradient(180deg,#f6f6f6 0%,#ececec 30%,#d6d6d6 60%,#cbcbcb 100%);border:2px solid #a6acc4;border-left:2px solid #aeb2c8;box-shadow:inset -1px 1px 0 rgba(255,255,255,.75);border-right:none;"><svg style="left:5.8px;top:13.5px;" width="18.5" height="11" viewBox="0 0 18.5 11"><path d="M0 0H5.10L9.25 4.94L13.40 0H18.5L9.25 11Z" fill="#28508c"/></svg></div>
<div style="position:absolute;left:1711px;top:704px;width:34px;height:44px;background:linear-gradient(180deg,#f6f6f6 0%,#ececec 30%,#d6d6d6 60%,#cbcbcb 100%);border:2px solid #a6acc4;border-left:2px solid #aeb2c8;box-shadow:inset -1px 1px 0 rgba(255,255,255,.75);border-right:none;"><svg style="left:4px;top:8px;" width="22" height="22" viewBox="0 0 1536 1536"><path transform="translate(0,1400) scale(1,-1)" fill="#2b4f8c" d="M1511 480q0 -5 -1 -7q-64 -268 -268 -434.5t-478 -166.5q-146 0 -282.5 55t-243.5 157l-129 -129q-19 -19 -45 -19t-45 19t-19 45v448q0 26 19 45t45 19h448q26 0 45 -19t19 -45t-19 -45l-137 -137q71 -66 161 -102t187 -36q134 0 250 65t186 179q11 17 53 117 q8 23 30 23h192q13 0 22.500 -9.500t9.500 -22.500zM1536 1280v-448q0 -26 -19 -45t-45 -19h-448q-26 0 -45 19t-19 45t19 45l138 138q-148 137 -349 137q-134 0 -250 -65t-186 -179q-11 -17 -53 -117q-8 -23 -30 -23h-199q-13 0 -22.500 9.500t-9.500 22.500v7q65 268 270 434.500t480 166.500 q146 0 284 -55.500t245 -156.500l130 129q19 19 45 19t45 -19t19 -45z"/></svg></div>
<div style="position:absolute;left:1745px;top:704px;width:34.5px;height:44px;background:linear-gradient(180deg,#f6f6f6 0%,#ececec 30%,#d6d6d6 60%,#cbcbcb 100%);border:2px solid #a6acc4;border-left:2px solid #aeb2c8;box-shadow:inset -1px 1px 0 rgba(255,255,255,.75);border-top-right-radius:4px;"><svg style="left:7px;top:16px;" width="18" height="6" viewBox="0 0 18 6"><rect x="0.500" y="0.500" width="4" height="4" fill="#222"/><rect x="6.500" y="0.500" width="4" height="4" fill="#222"/><rect x="12.500" y="0.500" width="4" height="4" fill="#222"/></svg></div>
<div style="position:absolute;left:630.5px;top:776.88px;font-size:22px;line-height:29px;color:#34365e;font-weight:normal;letter-spacing:-0.2px;white-space:nowrap;">Name</div>
<div style="position:absolute;left:630px;top:806px;width:1114.5px;height:44px;background:linear-gradient(180deg,#e2e5e5 0px,#eef0f0 3px,#fbfbfb 9px,#fff 14px);border:2px solid #a6acc4;border-right:none;"></div>
<div style="position:absolute;left:638px;top:814px;width:38px;height:28px;background:linear-gradient(180deg,#c4c2c6,#a9a7ab);border-radius:5px;"><div style="position:absolute;left:0;right:0;top:0;text-align:center;font-size:21px;line-height:28px;color:#fff;letter-spacing:-.5px">DE</div></div>
<div style="position:absolute;left:684px;top:813.18px;font-size:24px;line-height:31px;color:#000;font-weight:normal;letter-spacing:-0.2px;white-space:nowrap;">Couverts C5 20x "Print Stern"</div>
<div style="position:absolute;left:1744.5px;top:806px;width:35px;height:44px;background:linear-gradient(180deg,#f6f6f6 0%,#ececec 30%,#d6d6d6 60%,#cbcbcb 100%);border:2px solid #a6acc4;border-left:2px solid #aeb2c8;box-shadow:inset -1px 1px 0 rgba(255,255,255,.75);border-top-right-radius:4px;"><svg style="left:5.5px;top:9px;" width="19" height="19" viewBox="0 0 24 24"><defs><radialGradient id="g16" cx="40%" cy="35%" r="70%"><stop offset="0" stop-color="#49b6e8"/><stop offset="1" stop-color="#0e6fb3"/></radialGradient></defs>
<circle cx="12" cy="12" r="11.3" fill="url(#g16)" stroke="#0b5d99" stroke-width=".8"/>
<path d="M5 6.5c2-2 4.5-2.2 6-1.2 1.5.9 3.5 0 4.6 1.4 1 1.4-.6 2.6-1.8 3.4-1.3.8-1 2.4-2.6 2.8-1.4.3-1.4 2-2.8 2.2-1.4.1-2.2-1.5-3-2.8C4.500 11 3.500 8.200 5 6.500z" fill="#3fae5a"/>
<path d="M15 13.500c1.400-.6 3.200 0 3.600 1.200.4 1.300-.6 3-2 3.800-1.300.7-2.400-.3-2.500-1.700-.1-1.300-.3-2.700.9-3.300z" fill="#3fae5a"/></svg></div>
<div style="position:absolute;left:630.5px;top:878.88px;font-size:22px;line-height:29px;color:#34365e;font-weight:normal;letter-spacing:-0.2px;white-space:nowrap;">Beschreibung</div>
<div style="position:absolute;left:630px;top:908px;width:1114.5px;height:132px;background:linear-gradient(180deg,#e2e5e5 0px,#eef0f0 3px,#fbfbfb 9px,#fff 14px);border:2px solid #a6acc4;border-right:none;"></div>
<div style="position:absolute;left:638px;top:916px;width:38px;height:28px;background:linear-gradient(180deg,#c4c2c6,#a9a7ab);border-radius:5px;"><div style="position:absolute;left:0;right:0;top:0;text-align:center;font-size:21px;line-height:28px;color:#fff;letter-spacing:-.5px">DE</div></div>
<div style="position:absolute;left:1744.5px;top:908px;width:35px;height:132px;background:linear-gradient(180deg,#f4f4f4 0,#e2e2e2 20px,#cbcbcb 42px,#cbcbcb 100%);border:2px solid #a6acc4;border-left:2px solid #b9bccb;"><svg style="left:5.5px;top:9px;" width="19" height="19" viewBox="0 0 24 24"><defs><radialGradient id="g17" cx="40%" cy="35%" r="70%"><stop offset="0" stop-color="#49b6e8"/><stop offset="1" stop-color="#0e6fb3"/></radialGradient></defs>
<circle cx="12" cy="12" r="11.3" fill="url(#g17)" stroke="#0b5d99" stroke-width=".8"/>
<path d="M5 6.5c2-2 4.5-2.2 6-1.2 1.5.9 3.5 0 4.6 1.4 1 1.4-.6 2.6-1.8 3.4-1.3.8-1 2.4-2.6 2.8-1.4.3-1.4 2-2.8 2.2-1.4.1-2.2-1.5-3-2.8C4.500 11 3.500 8.200 5 6.500z" fill="#3fae5a"/>
<path d="M15 13.500c1.400-.6 3.200 0 3.600 1.200.4 1.300-.6 3-2 3.800-1.300.7-2.400-.3-2.500-1.700-.1-1.300-.3-2.700.9-3.300z" fill="#3fae5a"/></svg></div>
<div style="position:absolute;left:630.5px;top:1068.88px;font-size:22px;line-height:29px;color:#34365e;font-weight:normal;letter-spacing:-0.2px;white-space:nowrap;">Verkaufspreis</div>
<div style="position:absolute;left:630px;top:1098px;width:236.5px;height:44px;background:linear-gradient(180deg,#e2e5e5 0px,#eef0f0 3px,#fbfbfb 9px,#fff 14px);border:2px solid #a6acc4;border-right:none;"></div><div style="position:absolute;left:637.8px;top:1104.98px;font-size:24px;line-height:31px;color:#000;font-weight:normal;letter-spacing:-0.2px;white-space:nowrap;">25</div>
<div style="position:absolute;left:866.5px;top:1098px;width:34.5px;height:44px;background:linear-gradient(180deg,#f6f6f6 0%,#e3e3e3 48%,#d2d2d2 50%,#ececec 52%,#d6d6d6 100%);border:2px solid #a6acc4;border-left:2px solid #b9bccb;border-radius:0 3px 3px 0;"><svg style="left:6.5px;top:4.5px;" width="18" height="10.5" viewBox="0 0 18 10.5"><path d="M0 10.5H5.14L9.0 5.99L12.86 10.5H18L9.0 0Z" fill="#28508c"/></svg><svg style="left:6.5px;top:25px;" width="18" height="10.5" viewBox="0 0 18 10.5"><path d="M0 0H5.14L9.0 4.51L12.86 0H18L9.0 10.5Z" fill="#28508c"/></svg></div>
<div style="position:absolute;left:922px;top:1068.88px;font-size:22px;line-height:29px;color:#34365e;font-weight:normal;letter-spacing:-0.2px;white-space:nowrap;">Letzter Einkaufspreis</div>
<svg style="left:1130px;top:1072px;" width="20" height="20" viewBox="0 0 22 22"><circle cx="11" cy="11" r="10.6" fill="#aab6c5"/><rect x="9.3" y="9" width="3.8" height="8" fill="#dae6f4"/><rect x="7.8" y="9" width="3" height="1.8" fill="#dae6f4"/><rect x="7.8" y="15.6" width="6.8" height="1.8" fill="#dae6f4"/><circle cx="11" cy="5.600" r="2.100" fill="#dae6f4"/></svg>
<div style="position:absolute;left:922px;top:1098px;width:236.0px;height:44px;background:linear-gradient(180deg,#e2e5e5 0px,#eef0f0 3px,#fbfbfb 9px,#fff 14px);border:2px solid #a6acc4;border-right:none;"></div><div style="position:absolute;left:929.8px;top:1104.98px;font-size:24px;line-height:31px;color:#000;font-weight:normal;letter-spacing:-0.2px;white-space:nowrap;">25</div>
<div style="position:absolute;left:1158px;top:1098px;width:34.5px;height:44px;background:linear-gradient(180deg,#f6f6f6 0%,#e3e3e3 48%,#d2d2d2 50%,#ececec 52%,#d6d6d6 100%);border:2px solid #a6acc4;border-left:2px solid #b9bccb;border-radius:0 3px 3px 0;"><svg style="left:6.5px;top:4.5px;" width="18" height="10.5" viewBox="0 0 18 10.5"><path d="M0 10.5H5.14L9.0 5.99L12.86 10.5H18L9.0 0Z" fill="#28508c"/></svg><svg style="left:6.5px;top:25px;" width="18" height="10.5" viewBox="0 0 18 10.5"><path d="M0 0H5.14L9.0 4.51L12.86 0H18L9.0 10.5Z" fill="#28508c"/></svg></div>
<div style="position:absolute;left:1214px;top:1068.88px;font-size:22px;line-height:29px;color:#34365e;font-weight:normal;letter-spacing:-0.2px;white-space:nowrap;">Einheit</div>
<div style="position:absolute;left:1214px;top:1098px;width:202.0px;height:44px;background:linear-gradient(180deg,#e2e5e5 0px,#eef0f0 3px,#fbfbfb 9px,#fff 14px);border:2px solid #a6acc4;border-right:none;"></div><div style="position:absolute;left:1221.8px;top:1104.98px;font-size:24px;line-height:31px;color:#000;font-weight:normal;letter-spacing:-0.2px;white-space:nowrap;">Stk.</div>
<svg style="left:1390px;top:1113px;" width="16" height="16" viewBox="0 0 16 16"><path d="M1.500 1.500l13 13M14.500 1.500l-13 13" stroke="#8d8d8d" stroke-width="2.200"/></svg>
<div style="position:absolute;left:1416px;top:1098px;width:35px;height:44px;background:linear-gradient(180deg,#f6f6f6 0%,#ececec 30%,#d6d6d6 60%,#cbcbcb 100%);border:2px solid #a6acc4;border-left:2px solid #aeb2c8;box-shadow:inset -1px 1px 0 rgba(255,255,255,.75);border-right:none;"><svg style="left:5.8px;top:13.5px;" width="18.5" height="11" viewBox="0 0 18.5 11"><path d="M0 0H5.10L9.25 4.94L13.40 0H18.5L9.25 11Z" fill="#28508c"/></svg></div>
<div style="position:absolute;left:1451px;top:1098px;width:34.5px;height:44px;background:linear-gradient(180deg,#f6f6f6 0%,#ececec 30%,#d6d6d6 60%,#cbcbcb 100%);border:2px solid #a6acc4;border-left:2px solid #aeb2c8;box-shadow:inset -1px 1px 0 rgba(255,255,255,.75);border-top-right-radius:4px;"><svg style="left:7px;top:16px;" width="18" height="6" viewBox="0 0 18 6"><rect x="0.500" y="0.500" width="4" height="4" fill="#222"/><rect x="6.500" y="0.500" width="4" height="4" fill="#222"/><rect x="12.500" y="0.500" width="4" height="4" fill="#222"/></svg></div>
<div style="position:absolute;left:1506.5px;top:1068.88px;font-size:22px;line-height:29px;color:#34365e;font-weight:normal;letter-spacing:-0.2px;white-space:nowrap;">Währung</div>
<div style="position:absolute;left:1506.5px;top:1098px;width:204px;height:44px;background:linear-gradient(180deg,#e2e5e5 0px,#eef0f0 3px,#fbfbfb 9px,#fff 14px);border:2px solid #a6acc4;border-right:none;"></div><div style="position:absolute;left:1514.3px;top:1104.98px;font-size:24px;line-height:31px;color:#000;font-weight:normal;letter-spacing:-0.2px;white-space:nowrap;">CHF</div>
<div style="position:absolute;left:1710.5px;top:1098px;width:34.5px;height:44px;background:linear-gradient(180deg,#f6f6f6 0%,#ececec 30%,#d6d6d6 60%,#cbcbcb 100%);border:2px solid #a6acc4;border-left:2px solid #aeb2c8;box-shadow:inset -1px 1px 0 rgba(255,255,255,.75);border-right:none;"><svg style="left:5.8px;top:13.5px;" width="18.5" height="11" viewBox="0 0 18.5 11"><path d="M0 0H5.10L9.25 4.94L13.40 0H18.5L9.25 11Z" fill="#28508c"/></svg></div>
<div style="position:absolute;left:1745px;top:1098px;width:34.5px;height:44px;background:linear-gradient(180deg,#f6f6f6 0%,#ececec 30%,#d6d6d6 60%,#cbcbcb 100%);border:2px solid #a6acc4;border-left:2px solid #aeb2c8;box-shadow:inset -1px 1px 0 rgba(255,255,255,.75);border-top-right-radius:4px;"><svg style="left:7px;top:16px;" width="18" height="6" viewBox="0 0 18 6"><rect x="0.500" y="0.500" width="4" height="4" fill="#222"/><rect x="6.500" y="0.500" width="4" height="4" fill="#222"/><rect x="12.500" y="0.500" width="4" height="4" fill="#222"/></svg></div>
<div style="position:absolute;left:630px;top:1156px;width:26px;height:26px;border:2px solid #8f9096;background:linear-gradient(135deg,#c3c8d1 0%,#dfe2e7 45%,#f4f4f4 100%);border-radius:2px;box-shadow:inset 0 0 0 2px rgba(255,255,255,.5)"></div>
<div style="position:absolute;left:664px;top:1154.18px;font-size:24px;line-height:31px;color:#000;font-weight:normal;letter-spacing:-0.2px;white-space:nowrap;">Brutto</div>
<div style="position:absolute;left:922px;top:1156px;width:26px;height:26px;border:2px solid #8f9096;background:linear-gradient(135deg,#c3c8d1 0%,#dfe2e7 45%,#f4f4f4 100%);border-radius:2px;box-shadow:inset 0 0 0 2px rgba(255,255,255,.5)"></div>
<div style="position:absolute;left:956px;top:1154.18px;font-size:24px;line-height:31px;color:#000;font-weight:normal;letter-spacing:-0.2px;white-space:nowrap;">Brutto</div>
<div style="position:absolute;left:630px;top:1260px;width:26px;height:26px;border:2px solid #8f9096;background:linear-gradient(135deg,#c3c8d1 0%,#dfe2e7 45%,#f4f4f4 100%);border-radius:2px;box-shadow:inset 0 0 0 2px rgba(255,255,255,.5)"></div>
<div style="position:absolute;left:664px;top:1258.18px;font-size:24px;line-height:31px;color:#000;font-weight:normal;letter-spacing:-0.2px;white-space:nowrap;">Inaktiv</div>
<svg style="left:743px;top:1263px;" width="28" height="22" viewBox="0 0 28 22"><path d="M1.500 11C5 5.500 9.500 3.500 14 3.500S23 5.500 26.500 11C23 16.500 18.500 18.500 14 18.500S5 16.500 1.500 11z" fill="none" stroke="#111" stroke-width="2.2"/>
<circle cx="12.500" cy="10.500" r="5" fill="#111"/><path d="M19.500 1L10.500 21" stroke="#dae6f4" stroke-width="5"/><path d="M18.700 .8L9.700 21.200" stroke="#111" stroke-width="2.200"/></svg>
<div style="position:absolute;left:620px;top:1435px;width:48px;height:43px;border:2px solid #7fabe3;border-radius:6px;background:linear-gradient(180deg,#b9d3f3,#9cc0ec);"></div>
<svg style="left:628px;top:1440px;" width="34" height="36" viewBox="0 0 34 36"><rect x="1" y="5" width="27" height="23" fill="#f7d35c" stroke="#c9a03a" stroke-width="1.400"/><rect x="2" y="6" width="25" height="5" fill="#fae28c"/>
<circle cx="11" cy="3.800" r="3" fill="#e8404f"/><path d="M11 6.500v3.500" stroke="#8a6d1f" stroke-width="1.200"/></svg>
<svg style="left:686px;top:1441px;" width="30" height="32" viewBox="0 0 30 32"><path d="M9 19.500L19.500 8.200a3.200 3.200 0 0 1 4.800 4.200L12 25.800a5.600 5.600 0 0 1-8.300-7.500L16.500 4.200" fill="none" stroke="#4a4a4a" stroke-width="2.400" stroke-linecap="round" transform="translate(2,1)"/></svg>
<div style="position:absolute;left:1460.5px;top:1435px;width:161px;height:43px;border:2px solid #b9b9b9;border-radius:6px;background:linear-gradient(180deg,#ffffff 0%,#f6f6f6 50%,#e4e4e4 100%);box-shadow:0 0 0 1px rgba(255,255,255,.5);"><div style="position:absolute;left:0;right:0;top:7px;text-align:center;font-size:22px;line-height:26px;font-weight:bold;color:#222;letter-spacing:.3px">Speichern</div></div>
<div style="position:absolute;left:1634.5px;top:1435px;width:154px;height:43px;border:2px solid #b9b9b9;border-radius:6px;background:linear-gradient(180deg,#ffffff 0%,#f6f6f6 50%,#e4e4e4 100%);box-shadow:0 0 0 1px rgba(255,255,255,.5);"><div style="position:absolute;left:0;right:0;top:7px;text-align:center;font-size:22px;line-height:26px;color:#222;letter-spacing:-.1px">Abbrechen</div></div></div>
</body></html>
